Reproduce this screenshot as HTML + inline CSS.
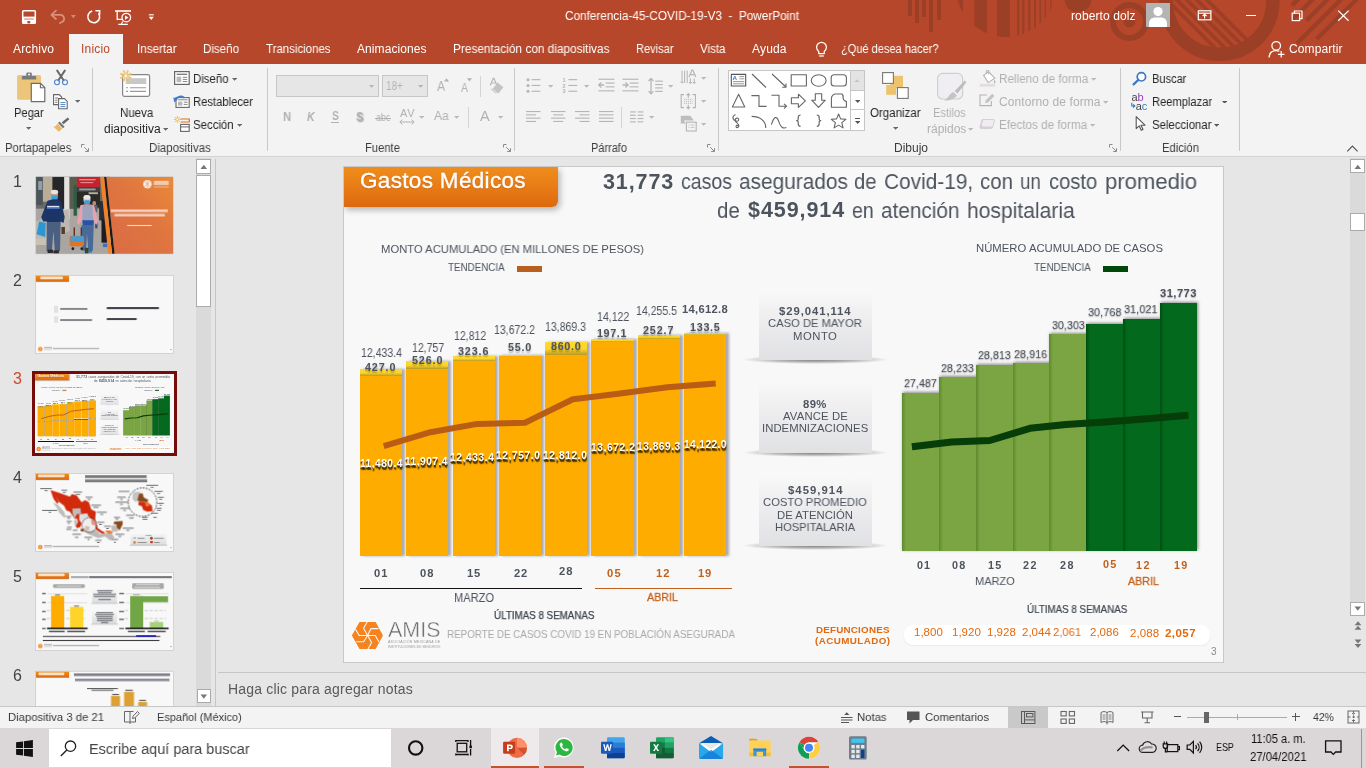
<!DOCTYPE html>
<html lang="es"><head><meta charset="utf-8"><title>PowerPoint</title>
<style>
html,body{margin:0;padding:0}
body{width:1366px;height:768px;overflow:hidden;position:relative;background:#E6E6E6;font-family:"Liberation Sans",sans-serif;}
.t{position:absolute;white-space:nowrap;transform-origin:0 50%;display:block;will-change:transform}
.b{position:absolute;display:block;box-sizing:border-box}
.c{position:absolute;overflow:hidden}
</style></head>
<body>
<!-- s_top -->
<div class="b" style="left:0.0px;top:0.0px;width:1366.0px;height:64.0px;background:#B7472A;"></div>
<svg class="b" style="left:0.0px;top:0.0px;" width="1366.0" height="64.0" viewBox="0 0 1366.00 64.00"><g fill="#9C3F27" stroke="none">
    <rect x="908" y="0" width="4" height="16"/><rect x="915" y="0" width="4" height="23"/><rect x="922" y="0" width="4" height="17"/><rect x="929" y="0" width="4" height="32"/><rect x="937" y="0" width="4" height="20"/>
    </g>
    <defs><clipPath id="semi"><circle cx="1006" cy="-13" r="50"/></clipPath></defs>
    <g clip-path="url(#semi)" fill="#9C3F27">
      <rect x="956" y="0" width="7" height="40"/>
      <rect x="974.3" y="0" width="12.7" height="40"/>
      <rect x="997" y="0" width="13" height="40"/>
      <rect x="1017" y="0" width="2.2" height="40"/><rect x="1022.2" y="0" width="2.2" height="40"/><rect x="1028.2" y="0" width="2.2" height="40"/><rect x="1034" y="0" width="2" height="40"/><rect x="1039.5" y="0" width="1.8" height="40"/><rect x="1044.6" y="0" width="1.5" height="40"/><rect x="1050.2" y="0" width="1.3" height="40"/><rect x="1055.2" y="0" width="1" height="40"/>
    </g>
    <circle cx="1078" cy="-1" r="13.5" fill="#9C3F27"/>
    <circle cx="1129.5" cy="21.5" r="16.5" fill="none" stroke="#9C3F27" stroke-width="6"/>
    <circle cx="1129.5" cy="21.5" r="6" fill="#9C3F27"/>
    <circle cx="1219.6" cy="1" r="53.3" fill="none" stroke="#9C3F27" stroke-width="13.5"/>
    <defs><clipPath id="bigin"><circle cx="1219.6" cy="1" r="47"/></clipPath></defs>
    <g clip-path="url(#bigin)" stroke="#9C3F27" stroke-width="3.6" fill="none">
      <path d="M1157 -10 L1237 70"/><path d="M1167 -10 L1247 70"/><path d="M1177 -10 L1257 70"/><path d="M1187 -10 L1267 70"/><path d="M1197 -10 L1277 70"/>
    </g>
    <g stroke="#9C3F27" stroke-width="4.2" fill="none">
      <path d="M1291.8 5.6 L1303 -5.6"/><path d="M1291.5 20.5 L1318 -6"/><path d="M1306.500 20.4 L1333 -6"/><path d="M1297 43.5 L1347 -6.500"/><path d="M1316.700 39 L1362 -6"/>
    </g></svg>
<svg class="b" style="left:18.0px;top:6.0px;" width="142.0" height="20.0" viewBox="0 0 142.00 20.00">
      <rect x="4.700" y="4.700" width="12.600" height="12.600" rx="0.800" fill="none" stroke="#fff" stroke-width="1.500"/>
      <rect x="5" y="10.600" width="12" height="6.800" fill="#fff"/>
      <rect x="9.400" y="15" width="2.800" height="2.400" fill="#B7472A"/><rect x="6.200" y="12.400" width="9.600" height="1.300" fill="#B7472A" opacity=".55"/>
      <g fill="none" stroke="#D9907C" stroke-width="1.700" stroke-linecap="round" stroke-linejoin="round"><path d="M38 4.600l-4.600 4.200l4.600 4.200"/><path d="M34 8.800h8.500a3.800 3.800 0 0 1 1.500 7.200l-2 1"/></g>
      <path d="M52.900 9h4.900l-2.450 3.200z" fill="#D08A78"/>
      <g fill="none" stroke="#fff" stroke-width="1.600"><path d="M74.200 5.100a5.900 5.900 0 1 0 6.300 2.200"/><path d="M77.400 4.700h4.200v4.100" stroke-width="1.600"/></g>
      <g fill="none" stroke="#fff" stroke-width="1.300"><path d="M97 5h16" stroke-width="1.600"/><path d="M99.200 5.200v8.100h5"/><circle cx="108.300" cy="11.600" r="4.300" fill="#B7472A"/><path d="M107 9.500v4.200l3.500-2.100z" fill="#fff" stroke="none"/><path d="M104.600 15.600l-1.200 2.600M100.300 18.400h9.500" stroke-width="1.100"/></g>
      <path d="M130.800 8.800h5" stroke="#fff" stroke-width="1.100"/><path d="M130.800 10.700h5l-2.500 3.200z" fill="#fff"/>
    </svg>
<span class="t" style="left:565.0px;top:7.5px;font-size:12px;line-height:16px;color:#fff;transform:scaleX(0.9801);white-space:pre;">Conferencia-45-COVID-19-V3  -  PowerPoint</span>
<span class="t" style="left:1071.0px;top:7.5px;font-size:12px;line-height:16px;color:#fff;letter-spacing:0.103px;">roberto dolz</span>
<div class="b" style="left:1146.0px;top:3.0px;width:24.0px;height:24.0px;background:#B4B4B4;"></div>
<svg class="b" style="left:1146.0px;top:3.0px;" width="24.0" height="24.0" viewBox="0 0 24.00 24.00"><circle cx="12" cy="8.6" r="4.6" fill="#fff"/><path d="M3 24v-3.5c0-4 3-6 6-6h6c3 0 6 2 6 6v3.5z" fill="#fff"/></svg>
<svg class="b" style="left:1196.0px;top:8.0px;" width="18.0" height="14.0" viewBox="0 0 18.00 14.00"><g fill="none" stroke="#fff" stroke-width="1.2"><rect x="2.3" y="2.8" width="12.6" height="9"/><path d="M2.3 5.2h12.6"/><path d="M8.6 10.6v-4M6.6 8.2l2-2l2 2"/></g></svg>
<div class="b" style="left:1246.0px;top:14.6px;width:10.2px;height:1.2px;background:#fff;"></div>
<svg class="b" style="left:1290.0px;top:9.0px;" width="14.0" height="13.0" viewBox="0 0 14.00 13.00"><g fill="none" stroke="#fff" stroke-width="1.2"><rect x="2.2" y="4.2" width="7.4" height="7.4"/><path d="M4.4 4v-2h7.6v7.6h-2.2"/></g></svg>
<svg class="b" style="left:1336.0px;top:8.0px;" width="15.0" height="15.0" viewBox="0 0 15.00 15.00"><path d="M2.2 2.6l10.4 10.2M12.6 2.6L2.2 12.8" stroke="#fff" stroke-width="1.25" fill="none"/></svg>
<div class="b" style="left:69.0px;top:34.0px;width:53.5px;height:30.0px;background:#F3F3F3;"></div>
<span class="t" style="left:13.0px;top:40.6px;font-size:12px;line-height:16px;color:#fff;letter-spacing:0.165px;">Archivo</span>
<span class="t" style="left:137.0px;top:40.6px;font-size:12px;line-height:16px;color:#fff;transform:scaleX(0.9710);">Insertar</span>
<span class="t" style="left:203.0px;top:40.6px;font-size:12px;line-height:16px;color:#fff;transform:scaleX(0.9638);">Diseño</span>
<span class="t" style="left:266.0px;top:40.6px;font-size:12px;line-height:16px;color:#fff;transform:scaleX(0.9544);">Transiciones</span>
<span class="t" style="left:357.0px;top:40.6px;font-size:12px;line-height:16px;color:#fff;letter-spacing:0.080px;">Animaciones</span>
<span class="t" style="left:453.0px;top:40.6px;font-size:12px;line-height:16px;color:#fff;transform:scaleX(0.9858);">Presentación con diapositivas</span>
<span class="t" style="left:636.0px;top:40.6px;font-size:12px;line-height:16px;color:#fff;transform:scaleX(0.9220);">Revisar</span>
<span class="t" style="left:700.0px;top:40.6px;font-size:12px;line-height:16px;color:#fff;transform:scaleX(0.9637);">Vista</span>
<span class="t" style="left:752.0px;top:40.6px;font-size:12px;line-height:16px;color:#fff;letter-spacing:0.173px;">Ayuda</span>
<span class="t" style="left:81.0px;top:40.6px;font-size:12px;line-height:16px;color:#B7472A;letter-spacing:0.198px;">Inicio</span>
<span class="t" style="left:841.0px;top:40.6px;font-size:12px;line-height:16px;color:#fff;transform:scaleX(0.9193);">¿Qué desea hacer?</span>
<svg class="b" style="left:812.0px;top:38.0px;" width="19.0" height="22.0" viewBox="0 0 19.00 22.00"><g fill="none" stroke="#fff" stroke-width="1.25"><path d="M6.8 13.6c-1.4-1.2-2.2-2.6-2.2-4.4a4.9 4.9 0 0 1 9.8 0c0 1.800-.8 3.200-2.200 4.400v2.100h-5.400z"/><path d="M7.200 18h4.600"/></g></svg>
<span class="t" style="left:1288.5px;top:40.6px;font-size:12px;line-height:16px;color:#fff;letter-spacing:0.103px;">Compartir</span>
<svg class="b" style="left:1267.0px;top:39.0px;" width="20.0" height="21.0" viewBox="0 0 20.00 21.00"><g fill="none" stroke="#fff" stroke-width="1.25"><circle cx="9.2" cy="6.800" r="4.300"/><path d="M2 18.500c.4-4.500 3-7 7.200-7c1.200 0 2.200.2 3.100.6"/><path d="M14.200 12v6.600M10.900 15.300h6.600"/></g></svg>
<!-- s_ribbon -->
<div class="b" style="left:0.0px;top:64.0px;width:1366.0px;height:92.0px;background:#F3F3F3;"></div>
<div class="b" style="left:0.0px;top:156.0px;width:1366.0px;height:1.0px;background:#D2D2D2;"></div>
<div class="b" style="left:92.0px;top:68.0px;width:1.0px;height:83.0px;background:#C8C8C8;"></div>
<div class="b" style="left:267.0px;top:68.0px;width:1.0px;height:83.0px;background:#C8C8C8;"></div>
<div class="b" style="left:513.9px;top:68.0px;width:1.0px;height:83.0px;background:#C8C8C8;"></div>
<div class="b" style="left:717.9px;top:68.0px;width:1.0px;height:83.0px;background:#C8C8C8;"></div>
<div class="b" style="left:1120.0px;top:68.0px;width:1.0px;height:83.0px;background:#C8C8C8;"></div>
<div class="b" style="left:1238.7px;top:68.0px;width:1.0px;height:83.0px;background:#C8C8C8;"></div>
<svg class="b" style="left:16.0px;top:70.0px;" width="31.0" height="34.0" viewBox="0 0 31.00 34.00">
      <rect x="1.100" y="4.900" width="23.900" height="24.900" rx="1.600" fill="#EDC57A"/>
      <path d="M5.900 9.400v-2.500a1 1 0 0 1 1-1h3.400v-2.300a1.200 1.200 0 0 1 1.200-1.200h3.100a1.200 1.200 0 0 1 1.200 1.200v2.300h3.400a1 1 0 0 1 1 1v2.500z" fill="#7A7A7A"/>
      <circle cx="13.050" cy="4.600" r="1.050" fill="#F3F3F3"/>
      <path d="M15.300 13.300h9.300l4.200 4.200v14.100h-13.500z" fill="#fff" stroke="#6E6E6E" stroke-width="1.200"/>
      <path d="M24.400 13.500v4.200h4.200" fill="none" stroke="#6E6E6E" stroke-width="1.100"/></svg>
<span class="t" style="left:14.3px;top:105.1px;font-size:12px;line-height:16px;color:#262626;transform:scaleX(0.9276);">Pegar</span>
<svg class="b" style="left:26.1px;top:127.3px" width="5.2" height="2.8" viewBox="0 0 5.2 2.8"><path d="M0 0h5.2l-2.6 2.8z" fill="#666"/></svg>
<svg class="b" style="left:52.0px;top:69.0px;" width="18.0" height="18.0" viewBox="0 0 18.00 18.00"><g fill="none" stroke="#666" stroke-width="1.900" stroke-linecap="round"><path d="M5.200 1.600l6.400 9.600M12.800 1.600l-6.400 9.600"/></g>
      <circle cx="5" cy="13.300" r="2.500" fill="none" stroke="#4A86CC" stroke-width="1.100"/><circle cx="13" cy="13.300" r="2.500" fill="none" stroke="#4A86CC" stroke-width="1.100"/></svg>
<svg class="b" style="left:52.0px;top:93.0px;" width="18.0" height="17.0" viewBox="0 0 18.00 17.00"><path d="M1.600 1.600h5.600l2.400 2.400v7.600h-8z" fill="#fff" stroke="#666" stroke-width="1.100"/>
      <path d="M6.600 5.600h5.800l2.800 2.800v7.400h-8.600z" fill="#fff" stroke="#666" stroke-width="1.100"/>
      <path d="M3.200 5h3M3.200 7.200h2.200M3.200 9.300h2.200" stroke="#666" stroke-width=".9"/>
      <path d="M8.400 9.600h5M8.400 11.600h5M8.400 13.600h5" stroke="#3B78C2" stroke-width=".9"/></svg>
<svg class="b" style="left:74.9px;top:100.1px" width="5.2" height="2.8" viewBox="0 0 5.2 2.8"><path d="M0 0h5.2l-2.6 2.8z" fill="#666"/></svg>
<svg class="b" style="left:52.0px;top:115.0px;" width="18.0" height="18.0" viewBox="0 0 18.00 18.00"><path d="M9.800 7.200l6-4.800l1.500 1.800l-5.800 5z" fill="#666"/><path d="M7.600 6.600l5 5.200l-1.600 1.400l-5-5.200z" fill="#777"/>
      <path d="M5.400 8.400l5 5.200l-3.600 3.200l-5.600-5.200c2 0 3.200-1 4.200-3.200z" fill="#EDB95E"/></svg>
<span class="t" style="left:4.5px;top:139.6px;font-size:12px;line-height:16px;color:#3C3C3C;transform:scaleX(0.9376);">Portapapeles</span>
<svg class="b" style="left:81.0px;top:144.0px;" width="8.0" height="8.0" viewBox="0 0 8.00 8.00"><path d="M0.500 3.500v-3h3M3.200 3.200l4 4M7.500 4.200v3.300h-3.300" fill="none" stroke="#8C8C8C" stroke-width="1"/></svg>
<svg class="b" style="left:118.0px;top:68.0px;" width="34.0" height="31.0" viewBox="0 0 34.00 31.00">
      <rect x="4.600" y="6.600" width="27" height="21.800" rx="1.800" fill="#fff" stroke="#858585" stroke-width="1.200"/>
      <rect x="7.700" y="10.200" width="20.600" height="5.800" fill="#C8C8C8"/>
      <path d="M8 19.800h2M12 19.800h16M8 23.400h2M12 23.400h16" stroke="#9A9A9A" stroke-width="1.100"/>
      <path d="M10.20 8.89L13.25 10.16M8.79 10.30L10.06 13.35M6.81 10.30L5.54 13.35M5.40 8.89L2.35 10.16M5.40 6.91L2.35 5.64M6.81 5.50L5.54 2.45M8.79 5.50L10.06 2.45M10.20 6.91L13.25 5.64" stroke="#EDC36E" stroke-width="1.800" fill="none"/><circle cx="7.800" cy="7.900" r="2.100" fill="#F6F1E4" stroke="#EDC36E" stroke-width="1"/></svg>
<span class="t" style="left:119.5px;top:105.1px;font-size:12px;line-height:16px;color:#262626;transform:scaleX(0.9572);">Nueva</span>
<span class="t" style="left:103.5px;top:120.7px;font-size:12px;line-height:16px;color:#262626;transform:scaleX(0.9965);">diapositiva</span>
<svg class="b" style="left:163.0px;top:127.8px" width="5.2" height="2.8" viewBox="0 0 5.2 2.8"><path d="M0 0h5.2l-2.6 2.8z" fill="#666"/></svg>
<svg class="b" style="left:173.0px;top:70.0px;" width="18.0" height="17.0" viewBox="0 0 18.00 17.00"><rect x="1.600" y="1.600" width="14.600" height="12.800" fill="#fff" stroke="#666" stroke-width="1.200"/>
      <path d="M3.600 4.300h10.600" stroke="#777" stroke-width="1.300"/><rect x="3.600" y="6.600" width="4.600" height="5.600" fill="#B9B9B9"/><path d="M9.800 7.300h4.400M9.800 9.400h4.400M9.800 11.500h4.400" stroke="#888" stroke-width="1"/></svg>
<span class="t" style="left:193.0px;top:71.1px;font-size:12px;line-height:16px;color:#262626;transform:scaleX(0.9504);">Diseño</span>
<svg class="b" style="left:231.7px;top:77.8px" width="5.2" height="2.8" viewBox="0 0 5.2 2.8"><path d="M0 0h5.2l-2.6 2.8z" fill="#666"/></svg>
<svg class="b" style="left:173.0px;top:93.0px;" width="18.0" height="17.0" viewBox="0 0 18.00 17.00"><rect x="3" y="4.600" width="13.200" height="9.800" fill="#fff" stroke="#666" stroke-width="1.100"/>
      <rect x="5" y="8.600" width="4.400" height="4" fill="#B9B9B9"/><path d="M10.800 9.200h3.800M10.800 11.400h3.800M5 6.800h9.600" stroke="#888" stroke-width="1"/>
      <path d="M2.600 7.400c.6-3.600 5.200-5 8.400-2.600" fill="none" stroke="#3F7FC8" stroke-width="2"/><path d="M0.200 4.600l4.800 1.200l-3.600 3.600z" fill="#3F7FC8"/></svg>
<span class="t" style="left:193.0px;top:94.1px;font-size:12px;line-height:16px;color:#262626;transform:scaleX(0.9371);">Restablecer</span>
<svg class="b" style="left:173.0px;top:114.0px;" width="18.0" height="19.0" viewBox="0 0 18.00 19.00"><path d="M5.30 5.40L7.70 5.40M5.01 6.11L6.70 7.80M4.30 6.40L4.30 8.80M3.59 6.11L1.90 7.80M3.30 5.40L0.90 5.40M3.59 4.69L1.90 3.00M4.30 4.40L4.30 2.00M5.01 4.69L6.70 3.00" stroke="#E9B04A" stroke-width=".9" fill="none"/>
      <path d="M7.600 5h8.700v3h-8.700" fill="none" stroke="#E2701E" stroke-width="1.200"/>
      <rect x="7.600" y="10.400" width="8.600" height="7" fill="#fff" stroke="#666" stroke-width="1.100"/><path d="M7.600 12.900h8.600" stroke="#666" stroke-width="1"/></svg>
<span class="t" style="left:193.0px;top:117.3px;font-size:12px;line-height:16px;color:#262626;transform:scaleX(0.9510);">Sección</span>
<svg class="b" style="left:236.9px;top:124.0px" width="5.2" height="2.8" viewBox="0 0 5.2 2.8"><path d="M0 0h5.2l-2.6 2.8z" fill="#666"/></svg>
<span class="t" style="left:149.0px;top:140.4px;font-size:12px;line-height:16px;color:#3C3C3C;transform:scaleX(0.9553);">Diapositivas</span>
<div class="b" style="left:276.3px;top:75.4px;width:103.1px;height:22.1px;background:#E6E6E6;border:1px solid #C6C6C6;"></div>
<div class="b" style="left:382.2px;top:75.4px;width:45.5px;height:22.1px;background:#E6E6E6;border:1px solid #C6C6C6;"></div>
<svg class="b" style="left:369.4px;top:85.2px" width="5.2" height="2.8" viewBox="0 0 5.2 2.8"><path d="M0 0h5.2l-2.6 2.8z" fill="#B4B4B4"/></svg>
<svg class="b" style="left:417.8px;top:85.2px" width="5.2" height="2.8" viewBox="0 0 5.2 2.8"><path d="M0 0h5.2l-2.6 2.8z" fill="#B4B4B4"/></svg>
<span class="t" style="left:386.0px;top:78.4px;font-size:12px;line-height:16px;color:#B4B4B4;transform:scaleX(0.8352);">18+</span>
<span class="t" style="left:436.7px;top:77.1px;font-size:14.5px;line-height:19px;color:#B1B1B1;transform:scaleX(0.8375);">A</span>
<svg class="b" style="left:443.5px;top:78.0px;" width="6.0" height="4.0" viewBox="0 0 6.00 4.00"><path d="M0 3.500h5l-2.500-3.300z" fill="#B1B1B1"/></svg>
<span class="t" style="left:461.3px;top:80.1px;font-size:12px;line-height:16px;color:#B1B1B1;transform:scaleX(0.8745);">A</span>
<svg class="b" style="left:467.4px;top:78.0px;" width="6.0" height="4.0" viewBox="0 0 6.00 4.00"><path d="M0 0.300h5l-2.500 3.300z" fill="#B1B1B1"/></svg>
<div class="b" style="left:479.7px;top:76.4px;width:1.0px;height:20.6px;background:#D4D4D4;"></div>
<svg class="b" style="left:488.0px;top:77.0px;" width="18.0" height="18.0" viewBox="0 0 18.00 18.00"><path d="M2.200 8.600l3-7.200h.8l3 7.200M3.400 6h4.400" fill="none" stroke="#B9B9B9" stroke-width="1.200"/>
      <path d="M9.600 5.600l5.800 4.600l-5 6.200l-5.800-4.600z" fill="#C4C4C4"/><path d="M3.600 11.200l5.400 4.400l-1 1.200l-5.400-4.400z" fill="#D8D0DC"/></svg>
<span class="t" style="left:283.0px;top:108.6px;font-size:12.5px;line-height:16px;color:#B1B1B1;font-weight:700;transform:scaleX(0.9084);">N</span>
<span class="t" style="left:306.6px;top:108.6px;font-size:12.5px;line-height:16px;color:#B1B1B1;font-weight:700;font-style:italic;transform:scaleX(0.8419);">K</span>
<span class="t" style="left:331.6px;top:108.2px;font-size:12.5px;line-height:16px;color:#B1B1B1;font-weight:700;transform:scaleX(0.8156);">S</span>
<div class="b" style="left:331.0px;top:122.4px;width:7.8px;height:1.1px;background:#B1B1B1;"></div>
<span class="t" style="left:355.6px;top:108.6px;font-size:12.5px;line-height:16px;color:#B1B1B1;font-weight:700;transform:scaleX(0.8395);text-shadow:1.200px 1.200px 1.500px #999;">S</span>
<span class="t" style="left:376.0px;top:110.4px;font-size:10.5px;line-height:14px;color:#B1B1B1;transform:scaleX(0.8507);">abc</span>
<div class="b" style="left:375.3px;top:117.6px;width:15.7px;height:1.0px;background:#B1B1B1;"></div>
<span class="t" style="left:399.6px;top:106.4px;font-size:11px;line-height:14px;color:#B1B1B1;letter-spacing:0.742px;">AV</span>
<svg class="b" style="left:399.0px;top:118.5px;" width="16.0" height="6.0" viewBox="0 0 16.00 6.00"><path d="M1 3h14M3.400 0.600l-2.600 2.400l2.600 2.400M12.600 0.600l2.600 2.400l-2.600 2.400" fill="none" stroke="#B1B1B1" stroke-width="1"/></svg>
<svg class="b" style="left:418.7px;top:116.0px" width="5.2" height="2.8" viewBox="0 0 5.2 2.8"><path d="M0 0h5.2l-2.6 2.8z" fill="#B9B9B9"/></svg>
<span class="t" style="left:434.0px;top:108.4px;font-size:12.5px;line-height:16px;color:#B1B1B1;transform:scaleX(0.9680);">Aa</span>
<svg class="b" style="left:453.7px;top:116.0px" width="5.2" height="2.8" viewBox="0 0 5.2 2.8"><path d="M0 0h5.2l-2.6 2.8z" fill="#B9B9B9"/></svg>
<div class="b" style="left:467.8px;top:107.0px;width:1.0px;height:20.6px;background:#D4D4D4;"></div>
<span class="t" style="left:479.6px;top:106.5px;font-size:14.5px;line-height:19px;color:#B1B1B1;transform:scaleX(0.9512);">A</span>
<svg class="b" style="left:497.7px;top:116.0px" width="5.2" height="2.8" viewBox="0 0 5.2 2.8"><path d="M0 0h5.2l-2.6 2.8z" fill="#B9B9B9"/></svg>
<span class="t" style="left:365.4px;top:140.4px;font-size:12px;line-height:16px;color:#3C3C3C;transform:scaleX(0.9343);">Fuente</span>
<svg class="b" style="left:503.0px;top:144.0px;" width="8.0" height="8.0" viewBox="0 0 8.00 8.00"><path d="M0.500 3.500v-3h3M3.200 3.200l4 4M7.500 4.200v3.300h-3.300" fill="none" stroke="#8C8C8C" stroke-width="1"/></svg>
<svg class="b" style="left:526.0px;top:77.0px;" width="15.0" height="17.0" viewBox="0 0 15.00 17.00"><g fill="#B4B4B4"><circle cx="2" cy="2.700" r="1.500"/><circle cx="2" cy="8.400" r="1.500"/><circle cx="2" cy="14.200" r="1.500"/>
      <rect x="5.600" y="2.100" width="8.800" height="1.100"/><rect x="5.600" y="7.900" width="8.800" height="1.100"/><rect x="5.600" y="13.700" width="8.800" height="1.100"/></g></svg>
<svg class="b" style="left:547.8px;top:85.2px" width="5.2" height="2.8" viewBox="0 0 5.2 2.8"><path d="M0 0h5.2l-2.6 2.8z" fill="#B9B9B9"/></svg>
<svg class="b" style="left:562.0px;top:77.0px;" width="16.0" height="18.0" viewBox="0 0 16.00 18.00"><g fill="#B4B4B4"><rect x="6.400" y="2.100" width="8.800" height="1.100"/><rect x="6.400" y="7.900" width="8.800" height="1.100"/><rect x="6.400" y="13.700" width="8.800" height="1.100"/></g>
      <g font-family="Liberation Sans" font-size="5.500" font-weight="700" fill="#B4B4B4"><text x="0.600" y="4.600">1</text><text x="0.600" y="10.500">2</text><text x="0.600" y="16.400">3</text></g></svg>
<svg class="b" style="left:583.7px;top:85.2px" width="5.2" height="2.8" viewBox="0 0 5.2 2.8"><path d="M0 0h5.2l-2.6 2.8z" fill="#B9B9B9"/></svg>
<svg class="b" style="left:598.0px;top:77.0px;" width="18.0" height="18.0" viewBox="0 0 18.00 18.00"><g fill="#B4B4B4"><rect x="0.500" y="1.700" width="16" height="1.100"/><rect x="7.600" y="5.500" width="8.900" height="1.100"/><rect x="7.600" y="9.300" width="8.900" height="1.100"/><rect x="0.500" y="13.300" width="16" height="1.100"/></g>
      <path d="M6.200 8h-5.400M3.400 5.400l-2.700 2.600l2.700 2.600" fill="none" stroke="#B4B4B4" stroke-width="1.300"/></svg>
<svg class="b" style="left:622.0px;top:77.0px;" width="18.0" height="18.0" viewBox="0 0 18.00 18.00"><g fill="#B4B4B4"><rect x="0.500" y="1.700" width="16" height="1.100"/><rect x="7.600" y="5.500" width="8.900" height="1.100"/><rect x="7.600" y="9.300" width="8.900" height="1.100"/><rect x="0.500" y="13.300" width="16" height="1.100"/></g>
      <path d="M0.600 8h5.400M3.400 5.400l2.700 2.600l-2.700 2.600" fill="none" stroke="#B4B4B4" stroke-width="1.300"/></svg>
<svg class="b" style="left:648.0px;top:77.0px;" width="16.0" height="19.0" viewBox="0 0 16.00 19.00"><path d="M3 1.600v15M0.600 4l2.400-2.600l2.400 2.600M0.600 14.200l2.400 2.600l2.400-2.600" fill="none" stroke="#B4B4B4" stroke-width="1.200"/>
      <g fill="#B4B4B4"><rect x="7.200" y="3.600" width="7.600" height="1.100"/><rect x="7.200" y="7" width="7.600" height="1.100"/><rect x="7.200" y="10.400" width="7.600" height="1.100"/><rect x="7.200" y="13.800" width="7.600" height="1.100"/></g></svg>
<svg class="b" style="left:668.0px;top:85.2px" width="5.2" height="2.8" viewBox="0 0 5.2 2.8"><path d="M0 0h5.2l-2.6 2.8z" fill="#B9B9B9"/></svg>
<svg class="b" style="left:680.0px;top:69.0px;" width="18.0" height="18.0" viewBox="0 0 18.00 18.00"><path d="M2 1.600v12.400M4.600 1.600v12.400M7.200 1.600v12.400" stroke="#B4B4B4" stroke-width="1" fill="none"/>
      <path d="M9 8l3-7h.8l3 7M10.200 5.600h4.400" fill="none" stroke="#B4B4B4" stroke-width="1.200"/>
      <path d="M10.400 9.400v5.200M9 13l1.400 1.600l1.400-1.600M14.200 9.400v5.200M12.800 13l1.400 1.600l1.400-1.600M0.600 12.600l1.400 1.600l1.400-1.600" fill="none" stroke="#B4B4B4" stroke-width="1"/></svg>
<svg class="b" style="left:700.7px;top:77.0px" width="5.2" height="2.8" viewBox="0 0 5.2 2.8"><path d="M0 0h5.2l-2.6 2.8z" fill="#B9B9B9"/></svg>
<svg class="b" style="left:680.0px;top:93.0px;" width="18.0" height="17.0" viewBox="0 0 18.00 17.00"><path d="M4 1.600h-2.800v13h2.800M12.600 1.600h2.800v13h-2.800" fill="none" stroke="#B4B4B4" stroke-width="1.100"/>
      <path d="M4 6.300h8.600M4 8.300h8.600M4 10.300h8.600" stroke="#B4B4B4" stroke-width=".9" stroke-dasharray="1.200 .8"/>
      <path d="M8.300 0.600v4.400M6.600 2.400l1.700-1.800l1.700 1.800M8.300 15.800v-4M6.600 14l1.700 1.800l1.700-1.800" fill="none" stroke="#B4B4B4" stroke-width="1.100"/></svg>
<svg class="b" style="left:700.7px;top:100.0px" width="5.2" height="2.8" viewBox="0 0 5.2 2.8"><path d="M0 0h5.2l-2.6 2.8z" fill="#B9B9B9"/></svg>
<svg class="b" style="left:680.0px;top:115.0px;" width="18.0" height="18.0" viewBox="0 0 18.00 18.00"><path d="M0.800 0.800h9.600l3.400 4.600h-9.800l1.600 3h-4.800z" fill="#BDBDBD"/>
      <rect x="6.400" y="7.200" width="9.800" height="8.800" fill="#F3F3F3" stroke="#B4B4B4" stroke-width="1.100"/><path d="M8.400 10h1M10.600 10h3.800M8.400 12.400h1M10.600 12.400h3.800" stroke="#D8B8D0" stroke-width="1"/></svg>
<svg class="b" style="left:700.7px;top:123.0px" width="5.2" height="2.8" viewBox="0 0 5.2 2.8"><path d="M0 0h5.2l-2.6 2.8z" fill="#B9B9B9"/></svg>
<svg class="b" style="left:526.4px;top:111.4px;" width="15.5" height="14.2" viewBox="0 0 15.50 14.20"><rect x="0.0" y="0.0" width="14.5" height="1.100" fill="#B4B4B4"/><rect x="0.0" y="3.3" width="10" height="1.100" fill="#B4B4B4"/><rect x="0.0" y="6.6" width="14.5" height="1.100" fill="#B4B4B4"/><rect x="0.0" y="9.9" width="10" height="1.100" fill="#B4B4B4"/></svg>
<svg class="b" style="left:550.6px;top:111.4px;" width="15.5" height="14.2" viewBox="0 0 15.50 14.20"><rect x="0.0" y="0.0" width="14.5" height="1.100" fill="#B4B4B4"/><rect x="2.2" y="3.3" width="10" height="1.100" fill="#B4B4B4"/><rect x="0.0" y="6.6" width="14.5" height="1.100" fill="#B4B4B4"/><rect x="2.2" y="9.9" width="10" height="1.100" fill="#B4B4B4"/></svg>
<svg class="b" style="left:574.8px;top:111.4px;" width="15.5" height="14.2" viewBox="0 0 15.50 14.20"><rect x="0.0" y="0.0" width="14.5" height="1.100" fill="#B4B4B4"/><rect x="4.5" y="3.3" width="10" height="1.100" fill="#B4B4B4"/><rect x="0.0" y="6.6" width="14.5" height="1.100" fill="#B4B4B4"/><rect x="4.5" y="9.9" width="10" height="1.100" fill="#B4B4B4"/></svg>
<svg class="b" style="left:598.7px;top:111.4px;" width="15.5" height="14.2" viewBox="0 0 15.50 14.20"><rect x="0.0" y="0.0" width="14.5" height="1.100" fill="#B4B4B4"/><rect x="0.0" y="3.3" width="14.5" height="1.100" fill="#B4B4B4"/><rect x="0.0" y="6.6" width="14.5" height="1.100" fill="#B4B4B4"/><rect x="0.0" y="9.9" width="14.5" height="1.100" fill="#B4B4B4"/></svg>
<div class="b" style="left:620.8px;top:107.0px;width:1.0px;height:20.6px;background:#D4D4D4;"></div>
<svg class="b" style="left:630.0px;top:111.0px;" width="15.0" height="13.0" viewBox="0 0 15.00 13.00"><g fill="#B4B4B4"><rect x="0" y="0.4" width="5.800" height="1.100"/><rect x="7.600" y="0.4" width="5.800" height="1.100"/><rect x="0" y="3.7" width="5.800" height="1.100"/><rect x="7.600" y="3.7" width="5.800" height="1.100"/><rect x="0" y="7.0" width="5.800" height="1.100"/><rect x="7.600" y="7.0" width="5.800" height="1.100"/><rect x="0" y="10.3" width="5.800" height="1.100"/><rect x="7.600" y="10.3" width="5.800" height="1.100"/></g></svg>
<svg class="b" style="left:648.8px;top:116.0px" width="5.2" height="2.8" viewBox="0 0 5.2 2.8"><path d="M0 0h5.2l-2.6 2.8z" fill="#B9B9B9"/></svg>
<span class="t" style="left:590.5px;top:140.4px;font-size:12px;line-height:16px;color:#3C3C3C;transform:scaleX(0.9124);">Párrafo</span>
<svg class="b" style="left:707.0px;top:144.0px;" width="8.0" height="8.0" viewBox="0 0 8.00 8.00"><path d="M0.500 3.500v-3h3M3.200 3.200l4 4M7.500 4.200v3.300h-3.300" fill="none" stroke="#8C8C8C" stroke-width="1"/></svg>
<!-- s_ribbon2 -->
<div class="b" style="left:728.3px;top:70.2px;width:136.3px;height:61.1px;background:#fff;border:1px solid #C6C6C6;"></div>
<div class="b" style="left:850.3px;top:70.2px;width:14.3px;height:61.1px;background:#fff;border:1px solid #C6C6C6;"></div>
<div class="b" style="left:850.3px;top:70.2px;width:14.3px;height:21.0px;background:#E3E3E3;border:1px solid #C6C6C6;"></div>
<div class="b" style="left:850.3px;top:91.2px;width:14.3px;height:19.0px;border-bottom:1px solid #C6C6C6;"></div>
<svg class="b" style="left:854.4px;top:79.2px;" width="6.2" height="3.2" viewBox="0 0 6.20 3.20"><path d="M0.500 3h5l-2.500-2.800z" fill="#C4C4C4"/></svg>
<svg class="b" style="left:854.8px;top:100.1px" width="5.4" height="3" viewBox="0 0 5.4 3"><path d="M0 0h5.4l-2.7 3z" fill="#555"/></svg>
<div class="b" style="left:854.6px;top:117.8px;width:5.8px;height:1.1px;background:#555;"></div>
<svg class="b" style="left:854.8px;top:120.7px" width="5.4" height="3" viewBox="0 0 5.4 3"><path d="M0 0h5.4l-2.7 3z" fill="#555"/></svg>
<svg class="b" style="left:728.0px;top:70.0px;" width="122.0" height="62.0" viewBox="0 0 122.00 62.00"><g fill="none" stroke="#666" stroke-width="1.100" stroke-linejoin="round">
      <rect x="3.300" y="4.400" width="14.400" height="11.600" stroke="#555"/>
      <path d="M11.400 6.600h4.800M11.400 8.800h4.800M5 11.600h11.200M5 13.800h11.200" stroke="#8A8A8A" stroke-width=".9"/>
      <path d="M24 4l14 13.500"/>
      <path d="M44 4l14 13M58 13.400v3.800h-3.800"/>
      <rect x="63.200" y="4.800" width="15.200" height="11.200"/>
      <ellipse cx="90.700" cy="10.500" rx="7.400" ry="5.800"/>
      <rect x="103.200" y="4.800" width="15.200" height="11.200" rx="3"/>
      <path d="M10.600 24.200l6.200 12.800h-12.400z"/>
      <path d="M23.400 25.600h7.600v10.800h7.600"/>
      <path d="M43.400 25.200h7.600v11h7.400M56 33.800l2.600 2.400l-2.600 2.400"/>
      <path d="M63.400 27.800h7v-3.600l7 6.600l-7 6.600v-3.600h-7z"/>
      <path d="M87.300 23.800h6.400v6.400h3.600l-6.800 7.200l-6.800-7.200h3.600z"/>
      <path d="M103.400 37.200v-8.800a4.400 4.400 0 0 1 4.400-4.400h6.200a4 4 0 0 1 1 3.800a4 4 0 0 0 3.400 3.600v5.800z"/>
      <path d="M7.500 44.600c-3 1.600-3.400 3.600-1.400 5.400c2.200 2 4.800 1.600 4.600-.6c-.2-2-3.400-1.600-3.600.8c-.2 2.400 3.800 3 3.800 5.600c0 2-2.400 2.400-2.800 1c-.4-1.600 1.600-2 2.600-.6"/>
      <path d="M23.600 46.400c8 0 14.200 4 14.200 11.600"/>
      <path d="M43.400 54.600c2.600-8.800 5.600-8.800 7.400-3c1.800 5.800 4.200 7.200 7.600 6"/>
      <path d="M72.600 45c-2.200 0-2.400 1-2.400 2.600c0 2 .2 3-1.600 3c1.800 0 1.600 1.200 1.600 3c0 1.800.2 2.800 2.400 2.800" stroke-width="1.200"/>
      <path d="M88.800 45c2.200 0 2.400 1 2.400 2.600c0 2-.2 3 1.600 3c-1.800 0-1.600 1.200-1.600 3c0 1.800-.2 2.800-2.400 2.800" stroke-width="1.200"/>
      <path d="M110.600 44l2 4.900l5.300.4l-4.100 3.400l1.300 5.200l-4.500-2.800l-4.500 2.800l1.300-5.200l-4.100-3.400l5.300-.4z"/>
    </g>
    <text x="4.600" y="9.900" font-family="Liberation Sans" font-weight="700" font-size="6.200" fill="#3B78C2">A</text></svg>
<svg class="b" style="left:880.0px;top:70.0px;" width="31.0" height="31.0" viewBox="0 0 31.00 31.00"><rect x="10.400" y="5.800" width="12.600" height="12.600" fill="#EDC36E"/><rect x="6.200" y="15" width="9.800" height="9.800" fill="#EDC36E"/>
      <rect x="2.600" y="2.600" width="10.800" height="10.800" fill="#fff" stroke="#777" stroke-width="1.100"/><rect x="17.400" y="17.600" width="10.800" height="10.800" fill="#fff" stroke="#777" stroke-width="1.100"/></svg>
<span class="t" style="left:870.4px;top:105.1px;font-size:12px;line-height:16px;color:#262626;transform:scaleX(0.9604);">Organizar</span>
<svg class="b" style="left:892.8px;top:127.4px" width="5.2" height="2.8" viewBox="0 0 5.2 2.8"><path d="M0 0h5.2l-2.6 2.8z" fill="#666"/></svg>
<svg class="b" style="left:935.0px;top:71.0px;" width="33.0" height="33.0" viewBox="0 0 33.00 33.00"><rect x="2.600" y="2.400" width="25" height="25.600" rx="5" fill="#F1EEF3" stroke="#CFCFCF" stroke-width="1.200"/>
      <path d="M29.800 9.600l1.600 1.600l-9 11.400l-2.600-2.600z" fill="#BDBDBD"/><path d="M18.600 21l3.200 3.200c-1.400 3.600-7 5.600-13 5.200c4.600-1.600 5-6.600 9.800-8.400z" fill="#C4C4C4"/>
      <path d="M19.600 21.600l2 2" stroke="#F1EEF3" stroke-width="1"/></svg>
<span class="t" style="left:933.3px;top:105.1px;font-size:12px;line-height:16px;color:#B1B1B1;transform:scaleX(0.9252);">Estilos</span>
<span class="t" style="left:926.5px;top:120.7px;font-size:12px;line-height:16px;color:#B1B1B1;transform:scaleX(0.9910);">rápidos</span>
<svg class="b" style="left:968.0px;top:127.8px" width="5.2" height="2.8" viewBox="0 0 5.2 2.8"><path d="M0 0h5.2l-2.6 2.8z" fill="#B9B9B9"/></svg>
<svg class="b" style="left:978.0px;top:69.0px;" width="19.0" height="19.0" viewBox="0 0 19.00 19.00"><path d="M5.600 6.400l5-3.600l6.200 6.400l-6.600 4.400z" fill="#fff" stroke="#B4B4B4" stroke-width="1.100"/><path d="M8.400 4.200v-2.600h2.400v3.800" fill="none" stroke="#B4B4B4" stroke-width="1"/>
      <path d="M16.200 10.400c1.600 2.200 1.600 3.200.8 3.800c-.8.400-1.600-.4-.8-3.800z" fill="#B4B4B4"/><rect x="1.800" y="14.800" width="15.200" height="2.800" fill="#E3DCE3"/></svg>
<span class="t" style="left:998.5px;top:71.1px;font-size:12px;line-height:16px;color:#B1B1B1;transform:scaleX(0.9762);">Relleno de forma</span>
<svg class="b" style="left:1090.6px;top:77.8px" width="5.2" height="2.8" viewBox="0 0 5.2 2.8"><path d="M0 0h5.2l-2.6 2.8z" fill="#B9B9B9"/></svg>
<svg class="b" style="left:978.0px;top:92.0px;" width="19.0" height="18.0" viewBox="0 0 19.00 18.00"><path d="M9 3h-7v10.600h11.400v-4.600" fill="none" stroke="#B4B4B4" stroke-width="1.100"/>
      <path d="M7 11.200l.8-3l6.400-6.400l2.200 2.200l-6.400 6.400z" fill="#C4C4C4"/></svg>
<span class="t" style="left:998.5px;top:94.1px;font-size:12px;line-height:16px;color:#B1B1B1;letter-spacing:0.091px;">Contorno de forma</span>
<svg class="b" style="left:1102.9px;top:100.8px" width="5.2" height="2.8" viewBox="0 0 5.2 2.8"><path d="M0 0h5.2l-2.6 2.8z" fill="#B9B9B9"/></svg>
<svg class="b" style="left:978.0px;top:115.0px;" width="19.0" height="18.0" viewBox="0 0 19.00 18.00"><path d="M5.400 4h9.400c1.600 0 2.400 1 2 2.400l-1.600 5.400c-.4 1.400-1.400 2.200-3 2.200h-8.400c-1.800 0-2.600-1.200-2.200-2.600l1.400-5c.4-1.600 1-2.400 2.400-2.400z" fill="#D2D2D2"/>
      <path d="M6 5h8.600c1 0 1.400.6 1.200 1.400l-1 3.600c-.2 1-.8 1.400-1.800 1.400h-8c-1 0-1.400-.6-1.200-1.400l1-3.600c.2-1 .6-1.400 1.200-1.400z" fill="#F0ECF2"/></svg>
<span class="t" style="left:998.5px;top:117.3px;font-size:12px;line-height:16px;color:#B1B1B1;transform:scaleX(0.9724);">Efectos de forma</span>
<svg class="b" style="left:1090.0px;top:124.0px" width="5.2" height="2.8" viewBox="0 0 5.2 2.8"><path d="M0 0h5.2l-2.6 2.8z" fill="#B9B9B9"/></svg>
<span class="t" style="left:894.3px;top:140.4px;font-size:12px;line-height:16px;color:#3C3C3C;transform:scaleX(0.9965);">Dibujo</span>
<svg class="b" style="left:1109.0px;top:144.0px;" width="8.0" height="8.0" viewBox="0 0 8.00 8.00"><path d="M0.500 3.500v-3h3M3.200 3.200l4 4M7.500 4.200v3.300h-3.300" fill="none" stroke="#8C8C8C" stroke-width="1"/></svg>
<svg class="b" style="left:1131.0px;top:70.0px;" width="18.0" height="18.0" viewBox="0 0 18.00 18.00"><circle cx="10.400" cy="6.800" r="4.200" fill="#fff" stroke="#3B78C2" stroke-width="1.700"/><path d="M7.200 10l-4.600 4.400" stroke="#3B78C2" stroke-width="2.200" stroke-linecap="round"/></svg>
<span class="t" style="left:1151.6px;top:71.1px;font-size:12px;line-height:16px;color:#262626;transform:scaleX(0.9211);">Buscar</span>
<svg class="b" style="left:1130.0px;top:92.0px;" width="19.0" height="19.0" viewBox="0 0 19.00 19.00"><g font-family="Liberation Sans" font-size="11"><text x="1.400" y="8.600" fill="#444">a</text><text x="7.600" y="8.600" fill="#9344B8">b</text><text x="5.800" y="17.600" fill="#444">a</text><text x="11.800" y="17.600" fill="#3B78C2">c</text></g>
      <path d="M1.800 10.800v3.200h2.600M3.200 12.400l1.600 1.600l-1.600 1.600" fill="none" stroke="#3B78C2" stroke-width="1.100"/></svg>
<span class="t" style="left:1151.6px;top:94.1px;font-size:12px;line-height:16px;color:#262626;transform:scaleX(0.9291);">Reemplazar</span>
<svg class="b" style="left:1221.8px;top:100.6px" width="5.2" height="2.8" viewBox="0 0 5.2 2.8"><path d="M0 0h5.2l-2.6 2.8z" fill="#555"/></svg>
<svg class="b" style="left:1133.0px;top:114.0px;" width="16.0" height="19.0" viewBox="0 0 16.00 19.00"><path d="M3.200 2.600v12l3-2.800l2 4.400l1.800-.8l-2-4.200h4z" fill="#fff" stroke="#555" stroke-width="1.100" stroke-linejoin="round"/></svg>
<span class="t" style="left:1151.6px;top:117.3px;font-size:12px;line-height:16px;color:#262626;transform:scaleX(0.9474);">Seleccionar</span>
<svg class="b" style="left:1213.7px;top:124.0px" width="5.2" height="2.8" viewBox="0 0 5.2 2.8"><path d="M0 0h5.2l-2.6 2.8z" fill="#555"/></svg>
<span class="t" style="left:1161.5px;top:140.4px;font-size:12px;line-height:16px;color:#3C3C3C;transform:scaleX(0.9376);">Edición</span>
<svg class="b" style="left:1346.0px;top:144.0px;" width="13.0" height="9.0" viewBox="0 0 13.00 9.00"><path d="M1.200 7.400l5.200-5.200l5.200 5.200" fill="none" stroke="#555" stroke-width="1.200"/></svg>
<!-- s_panel -->
<div class="b" style="left:196.4px;top:158.0px;width:14.6px;height:547.6px;background:#DADADA;"></div>
<div class="b" style="left:196.4px;top:159.0px;width:14.6px;height:14.6px;background:#fff;border:1px solid #ABABAB;"></div>
<svg class="b" style="left:200.0px;top:163.5px;" width="8.0" height="5.5" viewBox="0 0 8.00 5.50"><path d="M0.500 5h6.600l-3.300-4.200z" fill="#777"/></svg>
<div class="b" style="left:196.4px;top:174.7px;width:14.6px;height:132.6px;background:#fff;border:1px solid #ABABAB;"></div>
<div class="b" style="left:196.6px;top:689.4px;width:14.4px;height:13.8px;background:#fff;border:1px solid #ABABAB;"></div>
<svg class="b" style="left:200.0px;top:693.5px;" width="8.0" height="5.5" viewBox="0 0 8.00 5.50"><path d="M0.500 0.600h6.600l-3.300 4.200z" fill="#777"/></svg>
<div class="b" style="left:215.0px;top:159.0px;width:1.0px;height:547.0px;background:#C6C6C6;"></div>
<span class="t" style="left:13.4px;top:170.5px;font-size:16px;line-height:21px;color:#444;">1</span>
<span class="t" style="left:13.4px;top:269.5px;font-size:16px;line-height:21px;color:#444;">2</span>
<span class="t" style="left:13.4px;top:466.9px;font-size:16px;line-height:21px;color:#444;">4</span>
<span class="t" style="left:13.4px;top:566.0px;font-size:16px;line-height:21px;color:#444;">5</span>
<span class="t" style="left:13.4px;top:664.5px;font-size:16px;line-height:21px;color:#444;">6</span>
<span class="t" style="left:13.4px;top:367.5px;font-size:16px;line-height:21px;color:#D24726;">3</span>
<svg class="b" style="left:30.0px;top:170.0px;" width="150.0" height="90.0" viewBox="0 0 1280 768"><defs><filter id="bl" x="-5%" y="-5%" width="110%" height="110%"><feGaussianBlur stdDeviation="2.2"/></filter><filter id="bl2" x="-5%" y="-5%" width="110%" height="110%"><feGaussianBlur stdDeviation="1.2"/></filter><linearGradient id="t1o" x1="1" y1="0" x2="0" y2="1"><stop offset="0" stop-color="#EA8A38"/><stop offset=".45" stop-color="#DF7540"/><stop offset="1" stop-color="#D96B45"/></linearGradient><clipPath id="t1c"><rect x="50" y="58" width="1172" height="658"/></clipPath></defs><g clip-path="url(#t1c)"><g filter="url(#bl)"><rect x="40" y="50" width="640" height="676" fill="#A9A5A1" /><rect x="40" y="50" width="640" height="280" fill="#6F6B66" /><rect x="50" y="58" width="60" height="242" fill="#4E545A" /><rect x="70" y="95" width="35" height="75" fill="#8FA0A8" /><rect x="110" y="58" width="82" height="212" fill="#B9AD97" /><rect x="192" y="58" width="100" height="272" fill="#25262A" /><rect x="292" y="58" width="46" height="362" fill="#E4E2DE" /><rect x="338" y="58" width="62" height="272" fill="#5A5B4E" /><rect x="372" y="130" width="28" height="260" fill="#2F5B44" /><rect x="400" y="58" width="198" height="88" fill="#C6212D" /><rect x="420" y="78" width="140" height="10" fill="#E9A0A4" /><rect x="430" y="104" width="110" height="8" fill="#E9A0A4" /><rect x="400" y="146" width="198" height="40" fill="#3C3F42" /><rect x="420" y="158" width="140" height="16" fill="#9A9C9C" /><rect x="400" y="186" width="198" height="134" fill="#2B2B28" /><rect x="500" y="190" width="80" height="16" fill="#B9B4A0" /><polygon points="50,440 330,330 340,520 50,640" fill="#BDB8B0"/><rect x="50" y="585" width="90" height="55" fill="#C9C1B3" /><rect x="590" y="265" width="65" height="165" fill="#2C2F3A" /><rect x="610" y="420" width="50" height="200" fill="#1E1F24" /><rect x="622" y="628" width="38" height="30" fill="#3B6FC4" /><ellipse cx="548" cy="285" rx="16" ry="20" fill="#B58D78"/><rect x="530" y="300" width="45" height="60" fill="#5A6578" /><rect x="556" y="440" width="20" height="58" fill="#3A4D70" /><ellipse cx="208" cy="212" rx="31" ry="40" fill="#C49A82"/><ellipse cx="209" cy="188" rx="32" ry="19" fill="#E9E3DA"/><rect x="182" y="218" width="54" height="36" fill="#3E9FD6" rx="10"/><path d="M150 262 Q208 236 262 262 L296 400 L286 452 L262 440 L254 448 H150 L142 440 L112 440 L96 400z" fill="#1D3566"/><rect x="146" y="306" width="104" height="24" fill="#DDE4F0" /><rect x="146" y="318" width="104" height="14" fill="#3C63B8" /><path d="M142 444h120l-6 250h-44l-12-170l-14 170h-44z" fill="#4B5F80"/><rect x="150" y="680" width="46" height="28" fill="#2A2A2E" /><rect x="200" y="686" width="46" height="26" fill="#2A2A2E" /><polygon points="78,440 134,452 130,572 56,548" fill="#2C97D4"/><rect x="268" y="486" width="30" height="60" fill="#5A3A2C" /><ellipse cx="486" cy="252" rx="30" ry="38" fill="#C8CED4"/><ellipse cx="486" cy="232" rx="30" ry="18" fill="#E8E8E8"/><rect x="462" y="258" width="50" height="34" fill="#3E9FD6" rx="10"/><path d="M430 300 Q486 284 546 300 L584 440 L566 468 L540 440 H438 L418 470 L400 450z" fill="#E6A3AE"/><path d="M448 300 Q488 292 532 300 L540 440 H446z" fill="#9AA4BE"/><path d="M446 428h100l-6 46q-44 22-88 0z" fill="#2852A6"/><path d="M440 470h104l-8 220h-38l-12-150l-8 150h-30z" fill="#486A98"/><rect x="468" y="664" width="32" height="48" fill="#2E4A2E" /><rect x="500" y="676" width="28" height="28" fill="#2F6FC0" /><rect x="372" y="490" width="12" height="110" fill="#6A2A2A" /><rect x="432" y="490" width="12" height="110" fill="#6A2A2A" /><rect x="338" y="562" width="124" height="88" fill="#E17326" rx="16"/><rect x="346" y="566" width="110" height="46" fill="#3F9FD8" rx="10"/><circle cx="366" cy="672" r="12" fill="#222"/><circle cx="442" cy="672" r="12" fill="#222"/></g><polygon points="650,58 1222,58 1222,716 720,716" fill="url(#t1o)"/><polygon points="632,58 650,58 722,716 700,716" fill="#1C1A1A" filter="url(#bl2)"/><polygon points="598,58 632,58 700,716 668,716" fill="#F0832B" filter="url(#bl2)"/><g filter="url(#bl2)"><circle cx="1002" cy="120" r="36" fill="#FBEFE6"/><path d="M980 100l44 40M1024 100l-44 40M1002 86v68" stroke="#E58C5A" stroke-width="5"/><rect x="1056" y="92" width="128" height="36" fill="#F8D8C4" opacity=".82"/><rect x="1056" y="138" width="128" height="12" fill="#F0B394" opacity=".8"/><rect x="690" y="337" width="486" height="22" fill="#FFF2EC" opacity=".72"/><rect x="720" y="374" width="430" height="22" fill="#FFF2EC" opacity=".72"/><rect x="830" y="469" width="210" height="9" fill="#FFF2EC" opacity=".8"/></g></g><rect x="50" y="58" width="1172" height="658" fill="none" stroke="#BEBEBE" stroke-width="4"/></svg>
<svg class="b" style="left:30.0px;top:270.0px;" width="150.0" height="90.0" viewBox="0 0 1280 768"><defs><filter id="bl" x="-5%" y="-5%" width="110%" height="110%"><feGaussianBlur stdDeviation="2.2"/></filter><filter id="bl2" x="-5%" y="-5%" width="110%" height="110%"><feGaussianBlur stdDeviation="1.2"/></filter><linearGradient id="og" x1="0" y1="0" x2="0" y2="1"><stop offset="0" stop-color="#EE8D1C"/><stop offset="1" stop-color="#DC680F"/></linearGradient></defs><rect x="47" y="45" width="1178" height="667" fill="#F8F8F8" stroke="#BEBEBE" stroke-width="5"/><rect x="53" y="52" width="282" height="52" fill="#000" opacity=".18" filter="url(#bl2)"/><rect x="50" y="48" width="282" height="52" fill="url(#og)"/><rect x="88" y="56" width="192" height="22" rx="4" fill="#fff" opacity=".78" filter="url(#bl2)"/><g filter="url(#bl2)"><rect x="205" y="305" width="35" height="60" fill="#E2E2E2" /><rect x="205" y="395" width="35" height="55" fill="#E2E2E2" /><rect x="258" y="324" width="232" height="16" fill="#5F6068" opacity=".8"/><rect x="258" y="419" width="272" height="16" fill="#5F6068" opacity=".8"/><rect x="655" y="316" width="445" height="18" fill="#2E3038" opacity=".9"/><rect x="655" y="410" width="255" height="17" fill="#2E3038" opacity=".9"/><circle cx="88" cy="674" r="19" fill="#F5831F"/><path d="M78 665l20 18M98 665l-20 18M88 657v34" stroke="#FBD9B8" stroke-width="3"/><rect x="120" y="658" width="68" height="11" fill="#8A8A8A" opacity=".7"/><rect x="120" y="677" width="68" height="4" fill="#BDBDBD" /><rect x="195" y="664" width="395" height="11" fill="#9A9A9A" opacity=".75"/><rect x="1195" y="677" width="15" height="6" fill="#999" /></g></svg>
<div class="b" style="left:32.0px;top:370.5px;width:145.1px;height:85.4px;background:#F8F8F8;border:3px solid #750B0B;"></div>
<div class="c" style="left:35px;top:373.6px;width:139.1px;height:79.3px;background:#F8F8F8"><div style="position:absolute;left:0;top:0;width:879px;height:495px;transform:scale(0.15813,0.16020);transform-origin:0 0">
<div class="b" style="left:0.0px;top:0.0px;width:214.0px;height:40.0px;background:linear-gradient(#EE8D1C,#E77A15 55%,#DC680F);border-bottom-right-radius:6px;box-shadow:2px 3px 6px rgba(0,0,0,.28);"></div>
<span class="t" style="left:16.0px;top:-1.1px;font-size:22.5px;line-height:29px;color:#fff;letter-spacing:0.330px;-webkit-text-stroke:.35px #fff;text-shadow:0 1px 1px rgba(160,70,0,.5);">Gastos Médicos</span>
<span class="t" style="left:259.4px;top:0.9px;font-size:21.5px;line-height:28px;color:#4D545E;font-weight:700;letter-spacing:0.889px;">31,773</span>
<span class="t" style="left:337.4px;top:0.4px;font-size:22.5px;line-height:29px;color:#4D545E;transform:scaleX(0.8677);">casos</span>
<span class="t" style="left:394.7px;top:0.4px;font-size:22.5px;line-height:29px;color:#4D545E;transform:scaleX(0.9271);">asegurados</span>
<span class="t" style="left:509.5px;top:0.4px;font-size:22.5px;line-height:29px;color:#4D545E;transform:scaleX(0.8991);">de</span>
<span class="t" style="left:540.1px;top:0.4px;font-size:22.5px;line-height:29px;color:#4D545E;transform:scaleX(0.9264);">Covid-19,</span>
<span class="t" style="left:636.3px;top:0.4px;font-size:22.5px;line-height:29px;color:#4D545E;transform:scaleX(0.9097);">con</span>
<span class="t" style="left:676.1px;top:0.4px;font-size:22.5px;line-height:29px;color:#4D545E;transform:scaleX(0.8352);">un</span>
<span class="t" style="left:704.6px;top:0.4px;font-size:22.5px;line-height:29px;color:#4D545E;transform:scaleX(0.8963);">costo</span>
<span class="t" style="left:761.4px;top:0.4px;font-size:22.5px;line-height:29px;color:#4D545E;transform:scaleX(0.9819);">promedio</span>
<span class="t" style="left:373.2px;top:28.6px;font-size:22.5px;line-height:29px;color:#4D545E;transform:scaleX(0.9111);">de</span>
<span class="t" style="left:404.1px;top:29.1px;font-size:21.5px;line-height:28px;color:#4D545E;font-weight:700;letter-spacing:0.919px;">$459,914</span>
<span class="t" style="left:508.2px;top:28.6px;font-size:22.5px;line-height:29px;color:#4D545E;transform:scaleX(0.8672);">en</span>
<span class="t" style="left:537.2px;top:28.6px;font-size:22.5px;line-height:29px;color:#4D545E;transform:scaleX(0.9229);">atención</span>
<span class="t" style="left:623.3px;top:28.6px;font-size:22.5px;line-height:29px;color:#4D545E;transform:scaleX(0.9369);">hospitalaria</span>
<span class="t" style="left:37.0px;top:74.7px;font-size:11.3px;line-height:15px;color:#4D545E;transform:scaleX(0.9957);">MONTO ACUMULADO (EN MILLONES DE PESOS)</span>
<span class="t" style="left:104.0px;top:94.1px;font-size:10.3px;line-height:13px;color:#4D545E;transform:scaleX(0.9510);">TENDENCIA</span>
<div class="b" style="left:173.0px;top:99.0px;width:25.0px;height:6.0px;background:#B8601E;"></div>
<div class="b" style="left:16.0px;top:202.0px;width:42.0px;height:186.7px;background:#FFAC00;box-shadow:2.500px 0 2.500px rgba(60,60,70,.42);"></div>
<div class="b" style="left:16.0px;top:202.0px;width:42.0px;height:6.5px;background:linear-gradient(#FFDA2E,#FCD42C 55%,#B89A24);"></div>
<div class="b" style="left:62.0px;top:193.9px;width:42.0px;height:194.8px;background:#FFAC00;box-shadow:2.500px 0 2.500px rgba(60,60,70,.42);"></div>
<div class="b" style="left:62.0px;top:193.9px;width:42.0px;height:7.7px;background:linear-gradient(#FFDA2E,#FCD42C 55%,#B89A24);"></div>
<div class="b" style="left:109.0px;top:189.2px;width:42.2px;height:199.5px;background:#FFAC00;box-shadow:2.500px 0 2.500px rgba(60,60,70,.42);"></div>
<div class="b" style="left:109.0px;top:189.2px;width:42.2px;height:4.4px;background:linear-gradient(#FFDA2E,#FCD42C 55%,#B89A24);"></div>
<div class="b" style="left:155.0px;top:187.7px;width:42.0px;height:201.0px;background:#FFAC00;box-shadow:2.500px 0 2.500px rgba(60,60,70,.42);"></div>
<div class="b" style="left:155.0px;top:187.7px;width:42.0px;height:1.1px;background:linear-gradient(#FFDA2E,#FCD42C 55%,#B89A24);"></div>
<div class="b" style="left:201.0px;top:174.9px;width:42.0px;height:213.8px;background:#FFAC00;box-shadow:2.500px 0 2.500px rgba(60,60,70,.42);"></div>
<div class="b" style="left:201.0px;top:174.9px;width:42.0px;height:12.7px;background:linear-gradient(#FFDA2E,#FCD42C 55%,#B89A24);"></div>
<div class="b" style="left:247.2px;top:171.9px;width:42.8px;height:216.8px;background:#FFAC00;box-shadow:2.500px 0 2.500px rgba(60,60,70,.42);"></div>
<div class="b" style="left:247.2px;top:171.9px;width:42.8px;height:3.0px;background:linear-gradient(#FFDA2E,#FCD42C 55%,#B89A24);"></div>
<div class="b" style="left:294.0px;top:167.8px;width:42.0px;height:220.9px;background:#FFAC00;box-shadow:2.500px 0 2.500px rgba(60,60,70,.42);"></div>
<div class="b" style="left:294.0px;top:167.8px;width:42.0px;height:3.8px;background:linear-gradient(#FFDA2E,#FCD42C 55%,#B89A24);"></div>
<div class="b" style="left:340.2px;top:166.0px;width:42.0px;height:222.7px;background:#FFAC00;box-shadow:2.500px 0 2.500px rgba(60,60,70,.42);"></div>
<div class="b" style="left:340.2px;top:166.0px;width:42.0px;height:1.8px;background:linear-gradient(#FFDA2E,#FCD42C 55%,#B89A24);"></div>
<svg class="b" style="left:0.0px;top:0.0px;" width="879.0" height="495.0" viewBox="0 0 879 495"><path d="M39.7 279.1 L86.5 265.2 L133.4 256.9 L181.0 255.7 L228.9 232.3 L276.0 226.6 L323.4 220.3 L371.7 216.5" fill="none" stroke="#B95D14" stroke-width="6" stroke-linejoin="round"/></svg>
<span class="t" style="left:17.0px;top:177.8px;font-size:12px;line-height:16px;color:#4D545E;transform:scaleX(0.8778);">12,433.4</span>
<span class="t" style="left:67.5px;top:172.7px;font-size:12px;line-height:16px;color:#4D545E;transform:scaleX(0.8774);">12,757</span>
<span class="t" style="left:109.7px;top:160.8px;font-size:12px;line-height:16px;color:#4D545E;transform:scaleX(0.8774);">12,812</span>
<span class="t" style="left:150.2px;top:154.8px;font-size:12px;line-height:16px;color:#4D545E;transform:scaleX(0.8778);">13,672.2</span>
<span class="t" style="left:201.0px;top:151.5px;font-size:12px;line-height:16px;color:#4D545E;transform:scaleX(0.8778);">13,869.3</span>
<span class="t" style="left:253.0px;top:141.7px;font-size:12px;line-height:16px;color:#4D545E;transform:scaleX(0.8801);">14,122</span>
<span class="t" style="left:292.0px;top:135.8px;font-size:12px;line-height:16px;color:#4D545E;transform:scaleX(0.8778);">14,255.5</span>
<span class="t" style="left:338.3px;top:134.7px;font-size:11.2px;line-height:15px;color:#4D545E;font-weight:700;letter-spacing:0.301px;">14,612.8</span>
<span class="t" style="left:21.0px;top:193.0px;font-size:10.8px;line-height:14px;color:#4D545E;font-weight:700;letter-spacing:0.844px;text-shadow:0 1.500px 1.500px rgba(0,0,0,.28);">427.0</span>
<span class="t" style="left:67.5px;top:186.3px;font-size:10.8px;line-height:14px;color:#4D545E;font-weight:700;letter-spacing:0.869px;text-shadow:0 1.500px 1.500px rgba(0,0,0,.28);">526.0</span>
<span class="t" style="left:114.0px;top:177.0px;font-size:10.8px;line-height:14px;color:#4D545E;font-weight:700;letter-spacing:0.844px;text-shadow:0 1.500px 1.500px rgba(0,0,0,.28);">323.6</span>
<span class="t" style="left:163.8px;top:173.3px;font-size:10.8px;line-height:14px;color:#4D545E;font-weight:700;letter-spacing:0.761px;text-shadow:0 1.500px 1.500px rgba(0,0,0,.28);">55.0</span>
<span class="t" style="left:207.0px;top:172.0px;font-size:10.8px;line-height:14px;color:#4D545E;font-weight:700;letter-spacing:0.669px;text-shadow:0 1.500px 1.500px rgba(0,0,0,.28);">860.0</span>
<span class="t" style="left:253.0px;top:159.2px;font-size:10.8px;line-height:14px;color:#4D545E;font-weight:700;letter-spacing:0.594px;text-shadow:0 1.500px 1.500px rgba(0,0,0,.28);">197.1</span>
<span class="t" style="left:299.0px;top:155.8px;font-size:10.8px;line-height:14px;color:#4D545E;font-weight:700;letter-spacing:0.869px;text-shadow:0 1.500px 1.500px rgba(0,0,0,.28);">252.7</span>
<span class="t" style="left:346.0px;top:152.5px;font-size:10.8px;line-height:14px;color:#4D545E;font-weight:700;letter-spacing:0.694px;text-shadow:0 1.500px 1.500px rgba(0,0,0,.28);">133.5</span>
<span class="t" style="left:15.5px;top:289.8px;font-size:10.2px;line-height:13px;color:#fff;font-weight:700;letter-spacing:0.480px;text-shadow:0 1.500px 0 #4A3400,0.500px 2.500px 1.200px #4A3400;">11,480.4</span>
<span class="t" style="left:61.0px;top:287.7px;font-size:10.2px;line-height:13px;color:#fff;font-weight:700;letter-spacing:0.466px;text-shadow:0 1.500px 0 #4A3400,0.500px 2.500px 1.200px #4A3400;">11,907.4</span>
<span class="t" style="left:106.3px;top:283.9px;font-size:10.2px;line-height:13px;color:#fff;font-weight:700;letter-spacing:0.600px;text-shadow:0 1.500px 0 #4A3400,0.500px 2.500px 1.200px #4A3400;">12,433.4</span>
<span class="t" style="left:152.4px;top:282.3px;font-size:10.2px;line-height:13px;color:#fff;font-weight:700;letter-spacing:0.600px;text-shadow:0 1.500px 0 #4A3400,0.500px 2.500px 1.200px #4A3400;">12,757.0</span>
<span class="t" style="left:199.0px;top:282.3px;font-size:10.2px;line-height:13px;color:#fff;font-weight:700;letter-spacing:0.600px;text-shadow:0 1.500px 0 #4A3400,0.500px 2.500px 1.200px #4A3400;">12,812.0</span>
<span class="t" style="left:246.5px;top:273.7px;font-size:10.2px;line-height:13px;color:#fff;font-weight:700;letter-spacing:0.600px;text-shadow:0 1.500px 0 #4A3400,0.500px 2.500px 1.200px #4A3400;">13,672.2</span>
<span class="t" style="left:292.6px;top:272.9px;font-size:10.2px;line-height:13px;color:#fff;font-weight:700;letter-spacing:0.500px;text-shadow:0 1.500px 0 #4A3400,0.500px 2.500px 1.200px #4A3400;">13,869.3</span>
<span class="t" style="left:340.2px;top:271.4px;font-size:10.2px;line-height:13px;color:#fff;font-weight:700;letter-spacing:0.400px;text-shadow:0 1.500px 0 #4A3400,0.500px 2.500px 1.200px #4A3400;">14,122.0</span>
<span class="t" style="left:29.5px;top:398.5px;font-size:11.2px;line-height:15px;color:#4D545E;font-weight:700;letter-spacing:1.044px;">01</span>
<span class="t" style="left:76.0px;top:398.5px;font-size:11.2px;line-height:15px;color:#4D545E;font-weight:700;letter-spacing:0.943px;">08</span>
<span class="t" style="left:123.3px;top:398.5px;font-size:11.2px;line-height:15px;color:#4D545E;font-weight:700;letter-spacing:0.743px;">15</span>
<span class="t" style="left:170.0px;top:398.5px;font-size:11.2px;line-height:15px;color:#4D545E;font-weight:700;letter-spacing:0.843px;">22</span>
<span class="t" style="left:214.6px;top:396.8px;font-size:11.2px;line-height:15px;color:#4D545E;font-weight:700;letter-spacing:1.144px;">28</span>
<span class="t" style="left:263.4px;top:398.5px;font-size:11.2px;line-height:15px;color:#C2611C;font-weight:700;letter-spacing:1.344px;">05</span>
<span class="t" style="left:311.6px;top:398.5px;font-size:11.2px;line-height:15px;color:#C2611C;font-weight:700;letter-spacing:0.943px;">12</span>
<span class="t" style="left:354.2px;top:398.5px;font-size:11.2px;line-height:15px;color:#C2611C;font-weight:700;letter-spacing:0.743px;">19</span>
<div class="b" style="left:15.5px;top:420.8px;width:222.0px;height:1.2px;background:#111;"></div>
<div class="b" style="left:250.5px;top:420.8px;width:137.1px;height:1.2px;background:#C2611C;"></div>
<span class="t" style="left:110.2px;top:422.6px;font-size:12.3px;line-height:16px;color:#4D545E;transform:scaleX(0.9029);">MARZO</span>
<span class="t" style="left:303.0px;top:422.7px;font-size:11.5px;line-height:15px;color:#C2611C;transform:scaleX(0.9327);-webkit-text-stroke:.3px #C2611C;">ABRIL</span>
<span class="t" style="left:149.7px;top:442.3px;font-size:10.3px;line-height:13px;color:#3F4650;transform:scaleX(0.9508);-webkit-text-stroke:.25px #3F4650;">ÚLTIMAS 8 SEMANAS</span>
<svg class="b" style="left:7.0px;top:453.0px;" width="33.0" height="31.0" viewBox="0 0 33 31"><path d="M0.860 15.400L8.540 1.900H24.650L31.970 15.400L24.650 29H8.540z" fill="#F5831F"/>
    <g fill="none" stroke="#F8F8F8" stroke-width="1.100" stroke-linejoin="miter">
      <path d="M16.230 1.900L12.570 8.300L16.600 15.500L20.620 22.550L16.960 29"/>
      <path d="M4.520 9.200L8.180 15.500H24.280L27.940 22.100"/>
      <path d="M27.500 8.640H19.900L16.600 15.500L12.570 21.800H5.250"/>
    </g></svg>
<span class="t" style="left:43.8px;top:448.9px;font-size:21.5px;line-height:28px;color:#6A6A6A;transform:scaleX(0.9969);font-weight:400;-webkit-text-stroke:.45px #F8F8F8;">AMIS</span>
<span class="t" style="left:43.6px;top:473.3px;font-size:3.6px;line-height:5px;color:#9A9A9A;letter-spacing:0.190px;">ASOCIACIÓN MEXICANA DE</span>
<span class="t" style="left:43.6px;top:477.7px;font-size:3.6px;line-height:5px;color:#9A9A9A;transform:scaleX(0.9885);">INSTITUCIONES DE SEGUROS</span>
<span class="t" style="left:103.0px;top:461.1px;font-size:10.3px;line-height:13px;color:#A9A9A9;transform:scaleX(0.9517);">REPORTE DE CASOS COVID 19 EN POBLACIÓN ASEGURADA</span>
<div class="b" style="left:398.0px;top:188.7px;width:147.0px;height:8.0px;background:radial-gradient(ellipse at 50% 45%,rgba(0,0,0,.5) 0,rgba(0,0,0,.26) 40%,rgba(0,0,0,0) 70%);"></div>
<div class="b" style="left:414.8px;top:124.5px;width:113.2px;height:68.7px;background:linear-gradient(#F8F8F8 0,#F1F1F2 25%,#E9E9EB 60%,#E0E1E3 100%);"></div>
<div class="b" style="left:398.0px;top:281.5px;width:147.0px;height:8.0px;background:radial-gradient(ellipse at 50% 45%,rgba(0,0,0,.5) 0,rgba(0,0,0,.26) 40%,rgba(0,0,0,0) 70%);"></div>
<div class="b" style="left:414.8px;top:216.0px;width:113.2px;height:70.0px;background:linear-gradient(#F8F8F8 0,#F1F1F2 25%,#E9E9EB 60%,#E0E1E3 100%);"></div>
<div class="b" style="left:398.0px;top:374.5px;width:147.0px;height:8.0px;background:radial-gradient(ellipse at 50% 45%,rgba(0,0,0,.5) 0,rgba(0,0,0,.26) 40%,rgba(0,0,0,0) 70%);"></div>
<div class="b" style="left:414.8px;top:310.3px;width:113.2px;height:68.7px;background:linear-gradient(#F8F8F8 0,#F1F1F2 25%,#E9E9EB 60%,#E0E1E3 100%);"></div>
<span class="t" style="left:435.2px;top:136.5px;font-size:11.3px;line-height:15px;color:#4D545E;font-weight:700;letter-spacing:0.939px;">$29,041,114</span>
<span class="t" style="left:424.2px;top:148.9px;font-size:11.3px;line-height:15px;color:#4D545E;transform:scaleX(0.9915);">CASO DE MAYOR</span>
<span class="t" style="left:449.3px;top:161.8px;font-size:11.3px;line-height:15px;color:#4D545E;letter-spacing:0.513px;">MONTO</span>
<span class="t" style="left:458.7px;top:229.8px;font-size:11.3px;line-height:15px;color:#4D545E;font-weight:700;letter-spacing:0.392px;">89%</span>
<span class="t" style="left:438.8px;top:242.0px;font-size:11.3px;line-height:15px;color:#4D545E;letter-spacing:0.159px;">AVANCE DE</span>
<span class="t" style="left:418.1px;top:254.4px;font-size:11.3px;line-height:15px;color:#4D545E;letter-spacing:0.052px;">INDEMNIZACIONES</span>
<span class="t" style="left:443.5px;top:316.1px;font-size:11.3px;line-height:15px;color:#4D545E;font-weight:700;letter-spacing:1.053px;">$459,914</span>
<span class="t" style="left:419.4px;top:328.4px;font-size:11.3px;line-height:15px;color:#4D545E;transform:scaleX(0.9929);">COSTO PROMEDIO</span>
<span class="t" style="left:433.0px;top:341.0px;font-size:11.3px;line-height:15px;color:#4D545E;letter-spacing:0.024px;">DE ATENCIÓN</span>
<span class="t" style="left:431.3px;top:353.2px;font-size:11.3px;line-height:15px;color:#4D545E;transform:scaleX(0.9850);">HOSPITALARIA</span>
<span class="t" style="left:632.0px;top:73.7px;font-size:11.3px;line-height:15px;color:#4D545E;letter-spacing:0.022px;">NÚMERO ACUMULADO DE CASOS</span>
<span class="t" style="left:690.0px;top:94.1px;font-size:10.3px;line-height:13px;color:#4D545E;transform:scaleX(0.9527);">TENDENCIA</span>
<div class="b" style="left:759.2px;top:98.5px;width:24.8px;height:6.3px;background:#00470A;"></div>
<div class="b" style="left:558.2px;top:225.9px;width:37.0px;height:157.7px;box-shadow:1px -1px 3px rgba(0,0,0,.45);"></div>
<div class="b" style="left:595.2px;top:209.7px;width:36.8px;height:173.9px;box-shadow:1px -1px 3px rgba(0,0,0,.45);"></div>
<div class="b" style="left:632.0px;top:197.8px;width:37.0px;height:185.8px;box-shadow:1px -1px 3px rgba(0,0,0,.45);"></div>
<div class="b" style="left:669.0px;top:196.2px;width:36.3px;height:187.4px;box-shadow:1px -1px 3px rgba(0,0,0,.45);"></div>
<div class="b" style="left:705.3px;top:167.3px;width:36.7px;height:216.3px;box-shadow:1px -1px 3px rgba(0,0,0,.45);"></div>
<div class="b" style="left:742.0px;top:156.8px;width:37.0px;height:226.8px;box-shadow:1px -1px 3px rgba(0,0,0,.45);"></div>
<div class="b" style="left:779.0px;top:151.7px;width:36.9px;height:231.9px;box-shadow:1px -1px 3px rgba(0,0,0,.45);"></div>
<div class="b" style="left:815.9px;top:135.7px;width:37.0px;height:247.9px;box-shadow:1px -1px 3px rgba(0,0,0,.45);"></div>
<div class="b" style="left:558.2px;top:225.9px;width:37.3px;height:157.7px;background:linear-gradient(90deg,#5E8A2E 0,#7AA542 4px,#7AA542 100%);"></div>
<div class="b" style="left:595.2px;top:209.7px;width:37.1px;height:173.9px;background:linear-gradient(90deg,#5E8A2E 0,#7AA542 4px,#7AA542 100%);"></div>
<div class="b" style="left:632.0px;top:197.8px;width:37.3px;height:185.8px;background:linear-gradient(90deg,#5E8A2E 0,#7AA542 4px,#7AA542 100%);"></div>
<div class="b" style="left:669.0px;top:196.2px;width:36.6px;height:187.4px;background:linear-gradient(90deg,#5E8A2E 0,#7AA542 4px,#7AA542 100%);"></div>
<div class="b" style="left:705.3px;top:167.3px;width:37.0px;height:216.3px;background:linear-gradient(90deg,#5E8A2E 0,#7AA542 4px,#7AA542 100%);"></div>
<div class="b" style="left:742.0px;top:156.8px;width:37.3px;height:226.8px;background:linear-gradient(90deg,#004F12 0,#02691D 4px,#02691D 100%);"></div>
<div class="b" style="left:779.0px;top:151.7px;width:37.2px;height:231.9px;background:linear-gradient(90deg,#004F12 0,#02691D 4px,#02691D 100%);"></div>
<div class="b" style="left:815.9px;top:135.7px;width:37.3px;height:247.9px;background:linear-gradient(90deg,#004F12 0,#02691D 4px,#02691D 100%);"></div>
<svg class="b" style="left:0.0px;top:0.0px;" width="879.0" height="495.0" viewBox="0 0 879 495"><path d="M567.9 279.8 L607.6 275.0 L645.8 273.5 L685.9 261.3 L722.0 257.5 L760.9 255.0 L799.9 252.0 L844.4 248.3" fill="none" stroke="#063D08" stroke-width="7" stroke-linejoin="round"/></svg>
<span class="t" style="left:560.0px;top:209.4px;font-size:11.8px;line-height:15px;color:#4D545E;transform:scaleX(0.9089);text-shadow:0 1px 1.500px rgba(0,0,0,.35);">27,487</span>
<span class="t" style="left:597.0px;top:193.7px;font-size:11.8px;line-height:15px;color:#4D545E;transform:scaleX(0.9117);text-shadow:0 1px 1.500px rgba(0,0,0,.35);">28,233</span>
<span class="t" style="left:633.8px;top:180.8px;font-size:11.8px;line-height:15px;color:#4D545E;transform:scaleX(0.9089);text-shadow:0 1px 1.500px rgba(0,0,0,.35);">28,813</span>
<span class="t" style="left:670.2px;top:179.6px;font-size:11.8px;line-height:15px;color:#4D545E;transform:scaleX(0.9200);text-shadow:0 1px 1.500px rgba(0,0,0,.35);">28,916</span>
<span class="t" style="left:707.6px;top:151.2px;font-size:11.8px;line-height:15px;color:#4D545E;transform:scaleX(0.9089);text-shadow:0 1px 1.500px rgba(0,0,0,.35);">30,303</span>
<span class="t" style="left:743.9px;top:137.9px;font-size:11.8px;line-height:15px;color:#4D545E;transform:scaleX(0.9283);text-shadow:0 1px 1.500px rgba(0,0,0,.35);">30,768</span>
<span class="t" style="left:780.2px;top:135.1px;font-size:11.8px;line-height:15px;color:#4D545E;transform:scaleX(0.9283);text-shadow:0 1px 1.500px rgba(0,0,0,.35);">31,021</span>
<span class="t" style="left:815.9px;top:118.5px;font-size:11.2px;line-height:15px;color:#4D545E;font-weight:700;letter-spacing:0.449px;text-shadow:0 1px 1.500px rgba(0,0,0,.3);">31,773</span>
<span class="t" style="left:572.9px;top:391.2px;font-size:10.8px;line-height:14px;color:#4D545E;font-weight:700;letter-spacing:0.888px;">01</span>
<span class="t" style="left:608.2px;top:391.2px;font-size:10.8px;line-height:14px;color:#4D545E;font-weight:700;letter-spacing:1.188px;">08</span>
<span class="t" style="left:643.6px;top:391.2px;font-size:10.8px;line-height:14px;color:#4D545E;font-weight:700;letter-spacing:1.188px;">15</span>
<span class="t" style="left:678.7px;top:391.2px;font-size:10.8px;line-height:14px;color:#4D545E;font-weight:700;letter-spacing:1.388px;">22</span>
<span class="t" style="left:716.0px;top:391.2px;font-size:10.8px;line-height:14px;color:#4D545E;font-weight:700;letter-spacing:1.388px;">28</span>
<span class="t" style="left:758.8px;top:389.9px;font-size:10.8px;line-height:14px;color:#C2611C;font-weight:700;letter-spacing:1.188px;">05</span>
<span class="t" style="left:792.4px;top:391.2px;font-size:10.8px;line-height:14px;color:#C2611C;font-weight:700;letter-spacing:1.588px;">12</span>
<span class="t" style="left:829.7px;top:391.2px;font-size:10.8px;line-height:14px;color:#C2611C;font-weight:700;letter-spacing:1.188px;">19</span>
<span class="t" style="left:630.6px;top:406.7px;font-size:11.3px;line-height:15px;color:#4D545E;transform:scaleX(0.9754);">MARZO</span>
<span class="t" style="left:784.4px;top:406.7px;font-size:11.3px;line-height:15px;color:#C2611C;transform:scaleX(0.9461);-webkit-text-stroke:.3px #C2611C;">ABRIL</span>
<span class="t" style="left:683.4px;top:435.5px;font-size:10.3px;line-height:13px;color:#3F4650;transform:scaleX(0.9490);-webkit-text-stroke:.2px #3F4650;">ÚLTIMAS 8 SEMANAS</span>
<span class="t" style="left:472.1px;top:455.9px;font-size:9.8px;line-height:13px;color:#E2690E;font-weight:700;letter-spacing:0.217px;">DEFUNCIONES</span>
<span class="t" style="left:471.4px;top:467.1px;font-size:9.8px;line-height:13px;color:#E2690E;font-weight:700;letter-spacing:0.424px;">(ACUMULADO)</span>
<div class="b" style="left:559.7px;top:458.0px;width:306.6px;height:19.6px;background:#fff;border-radius:9px;box-shadow:0 1px 2px rgba(0,0,0,.06);"></div>
<span class="t" style="left:570.1px;top:457.7px;font-size:11.5px;line-height:15px;color:#E2690E;transform:scaleX(0.9974);">1,800</span>
<span class="t" style="left:607.7px;top:457.7px;font-size:11.5px;line-height:15px;color:#E2690E;transform:scaleX(0.9870);">1,920</span>
<span class="t" style="left:643.0px;top:457.7px;font-size:11.5px;line-height:15px;color:#E2690E;transform:scaleX(0.9974);">1,928</span>
<span class="t" style="left:677.9px;top:457.7px;font-size:11.5px;line-height:15px;color:#E2690E;transform:scaleX(0.9939);">2,044</span>
<span class="t" style="left:709.0px;top:457.7px;font-size:11.5px;line-height:15px;color:#E2690E;transform:scaleX(0.9765);">2,061</span>
<span class="t" style="left:745.9px;top:457.7px;font-size:11.5px;line-height:15px;color:#E2690E;transform:scaleX(0.9835);">2,086</span>
<span class="t" style="left:785.7px;top:458.8px;font-size:11.5px;line-height:15px;color:#E2690E;letter-spacing:0.081px;">2,088</span>
<span class="t" style="left:821.0px;top:458.8px;font-size:11.5px;line-height:15px;color:#E2690E;font-weight:700;letter-spacing:0.456px;">2,057</span>
<span class="t" style="left:866.6px;top:478.1px;font-size:10px;line-height:13px;color:#8A8A8A;transform:scaleX(0.9711);">3</span>
</div></div>
<div class="b" style="left:38.3px;top:440.8px;width:35.3px;height:1.1px;background:#111;"></div>
<div class="b" style="left:75.6px;top:440.8px;width:21.4px;height:1.1px;background:#C2611C;"></div>
<svg class="b" style="left:30.0px;top:467.0px;" width="150.0" height="90.0" viewBox="0 0 1280 768"><defs><filter id="bl" x="-5%" y="-5%" width="110%" height="110%"><feGaussianBlur stdDeviation="2.2"/></filter><filter id="bl2" x="-5%" y="-5%" width="110%" height="110%"><feGaussianBlur stdDeviation="1.2"/></filter><linearGradient id="og" x1="0" y1="0" x2="0" y2="1"><stop offset="0" stop-color="#EE8D1C"/><stop offset="1" stop-color="#DC680F"/></linearGradient><linearGradient id="lg4" x1="0" y1="0" x2="0" y2="1"><stop offset="0" stop-color="#F4F4F4"/><stop offset="1" stop-color="#DCDDDF"/></linearGradient></defs><rect x="47" y="55" width="1178" height="665" fill="#F8F8F8" stroke="#BEBEBE" stroke-width="5"/><rect x="53" y="62" width="282" height="52" fill="#000" opacity=".18" filter="url(#bl2)"/><rect x="50" y="58" width="282" height="52" fill="url(#og)"/><rect x="70" y="64" width="225" height="24" rx="4" fill="#fff" opacity=".78" filter="url(#bl2)"/><g filter="url(#bl2)"><rect x="470" y="70" width="525" height="24" fill="#2B2D33" opacity=".62"/><rect x="470" y="106" width="530" height="24" fill="#2B2D33" opacity=".62"/><path d="M175 198L245 218L340 252L356 232L396 240L440 300L470 282L502 300L522 362L562 380L556 440L576 520L612 546L642 560L622 572L586 552L560 530L540 470L510 430L470 400L440 420L420 450L440 482L430 512L400 522L384 492L410 470L400 440L380 440L340 380L310 370L290 330L250 300L222 250L246 300L230 312L200 270z" fill="#D22A0A"/><path d="M195 305L236 320L290 380L306 426L290 432L250 392L225 342z" fill="#BDBDBD"/><path d="M360 356L430 350L436 398L400 402L380 440L364 400z" fill="#BDBDBD"/><path d="M420 402L490 396L500 450L440 470L420 450z" fill="#E0E0E0"/><path d="M384 440L410 470L392 500L372 470z" fill="#C4C4C4"/><path d="M440 522L560 536L600 572L690 560L722 600L682 626L640 592L582 606L500 572L452 548z" fill="#B9B9B9"/><path d="M690 500L745 496L750 552L700 552z" fill="#BDBDBD"/><path d="M716 466L790 460L790 490L764 540L742 520L738 490L716 490z" fill="#8A4A1E"/><path d="M640 540L682 540L708 556L700 568L660 566z" fill="#E88030"/><path d="M430 526L458 530L456 552L432 548z" fill="#8A4A1E"/><circle cx="506" cy="494" r="58" fill="#EDEDED" opacity=".85"/><path d="M520 440l40 20l-4 40l-30-10z" fill="#E89080"/><path d="M470 500l40 10l-10 30l-30-6z" fill="#D8B8A0"/><circle cx="506" cy="494" r="62" fill="none" stroke="#2A2A2A" stroke-width="7" stroke-dasharray="12 7"/><path d="M880 215L940 210L950 270L900 300L872 270z" fill="#C4C4C4"/><path d="M930 230L960 222L970 260L1010 280L1000 300L940 295L915 285z" fill="#8A4A1E"/><path d="M925 295L1000 300L1040 330L1046 376L1000 380L965 365L955 335L925 325z" fill="#D22A0A"/><path d="M980 305L1012 300L1020 330L990 338z" fill="#E88030"/><circle cx="960" cy="300" r="122" fill="none" stroke="#2A2A2A" stroke-width="7" stroke-dasharray="16 10"/><rect x="88" y="180" width="98" height="8" fill="#33353B" opacity=".75"/><rect x="125" y="198" width="25" height="8" fill="#33353B" opacity=".75"/><rect x="268" y="194" width="50" height="8" fill="#33353B" opacity=".75"/><rect x="282" y="212" width="22" height="8" fill="#33353B" opacity=".75"/><rect x="370" y="210" width="74" height="8" fill="#33353B" opacity=".75"/><rect x="392" y="230" width="36" height="8" fill="#33353B" opacity=".75"/><rect x="474" y="254" width="60" height="8" fill="#33353B" opacity=".75"/><rect x="490" y="272" width="26" height="8" fill="#33353B" opacity=".75"/><rect x="522" y="322" width="84" height="8" fill="#33353B" opacity=".75"/><rect x="540" y="340" width="44" height="8" fill="#33353B" opacity=".75"/><rect x="572" y="382" width="82" height="8" fill="#33353B" opacity=".75"/><rect x="600" y="400" width="24" height="8" fill="#33353B" opacity=".75"/><rect x="104" y="366" width="128" height="8" fill="#33353B" opacity=".75"/><rect x="160" y="382" width="20" height="8" fill="#33353B" opacity=".75"/><rect x="308" y="418" width="44" height="8" fill="#33353B" opacity=".75"/><rect x="318" y="434" width="24" height="8" fill="#33353B" opacity=".75"/><rect x="312" y="460" width="44" height="8" fill="#33353B" opacity=".75"/><rect x="322" y="476" width="18" height="8" fill="#33353B" opacity=".75"/><rect x="316" y="510" width="40" height="8" fill="#33353B" opacity=".75"/><rect x="310" y="528" width="42" height="8" fill="#33353B" opacity=".75"/><rect x="366" y="536" width="38" height="8" fill="#33353B" opacity=".75"/><rect x="362" y="570" width="72" height="8" fill="#33353B" opacity=".75"/><rect x="384" y="596" width="28" height="8" fill="#33353B" opacity=".75"/><rect x="464" y="596" width="64" height="8" fill="#33353B" opacity=".75"/><rect x="490" y="614" width="18" height="8" fill="#33353B" opacity=".75"/><rect x="556" y="622" width="54" height="8" fill="#33353B" opacity=".75"/><rect x="572" y="640" width="22" height="8" fill="#33353B" opacity=".75"/><rect x="574" y="468" width="60" height="8" fill="#33353B" opacity=".75"/><rect x="590" y="486" width="22" height="8" fill="#33353B" opacity=".75"/><rect x="632" y="502" width="56" height="8" fill="#33353B" opacity=".75"/><rect x="650" y="520" width="22" height="8" fill="#33353B" opacity=".75"/><rect x="716" y="426" width="52" height="8" fill="#33353B" opacity=".75"/><rect x="730" y="442" width="22" height="8" fill="#33353B" opacity=".75"/><rect x="790" y="518" width="94" height="8" fill="#33353B" opacity=".75"/><rect x="822" y="536" width="26" height="8" fill="#33353B" opacity=".75"/><rect x="728" y="570" width="76" height="8" fill="#33353B" opacity=".75"/><rect x="754" y="588" width="24" height="8" fill="#33353B" opacity=".75"/><rect x="694" y="614" width="58" height="8" fill="#33353B" opacity=".75"/><rect x="716" y="638" width="18" height="8" fill="#33353B" opacity=".75"/><rect x="992" y="152" width="102" height="8" fill="#33353B" opacity=".75"/><rect x="1030" y="170" width="24" height="8" fill="#33353B" opacity=".75"/><rect x="756" y="204" width="92" height="8" fill="#33353B" opacity=".75"/><rect x="1062" y="204" width="70" height="8" fill="#33353B" opacity=".75"/><rect x="1084" y="222" width="26" height="8" fill="#33353B" opacity=".75"/><rect x="744" y="254" width="72" height="8" fill="#33353B" opacity=".75"/><rect x="770" y="272" width="20" height="8" fill="#33353B" opacity=".75"/><rect x="1090" y="254" width="52" height="8" fill="#33353B" opacity=".75"/><rect x="1104" y="272" width="22" height="8" fill="#33353B" opacity=".75"/><rect x="728" y="296" width="110" height="8" fill="#33353B" opacity=".75"/><rect x="768" y="314" width="24" height="8" fill="#33353B" opacity=".75"/><rect x="1090" y="306" width="52" height="8" fill="#33353B" opacity=".75"/><rect x="1106" y="322" width="18" height="8" fill="#33353B" opacity=".75"/><rect x="770" y="348" width="80" height="8" fill="#33353B" opacity=".75"/><rect x="796" y="366" width="22" height="8" fill="#33353B" opacity=".75"/><rect x="1078" y="348" width="44" height="8" fill="#33353B" opacity=".75"/><rect x="1084" y="366" width="32" height="8" fill="#33353B" opacity=".75"/><rect x="820" y="408" width="70" height="8" fill="#33353B" opacity=".75"/><rect x="846" y="432" width="38" height="8" fill="#33353B" opacity=".75"/><rect x="1034" y="390" width="58" height="8" fill="#33353B" opacity=".75"/><rect x="1052" y="426" width="28" height="8" fill="#33353B" opacity=".75"/><rect x="958" y="424" width="46" height="8" fill="#33353B" opacity=".75"/><rect x="960" y="442" width="42" height="8" fill="#33353B" opacity=".75"/><rect x="858" y="572" width="306" height="96" fill="url(#lg4)"/><rect x="850" y="664" width="322" height="6" fill="#000" opacity=".25"/><rect x="882" y="598" width="22" height="16" fill="#BDBDBD" /><circle cx="1036" cy="608" r="12" fill="#8A4A1E"/><circle cx="892" cy="644" r="12" fill="#E88030"/><rect x="1026" y="632" width="22" height="18" fill="#D22A0A" /><rect x="918" y="604" width="60" height="8" fill="#888" /><rect x="1060" y="604" width="80" height="8" fill="#888" /><rect x="918" y="640" width="78" height="8" fill="#888" /><rect x="1060" y="640" width="46" height="8" fill="#888" /><rect x="986" y="580" width="50" height="6" fill="#888" /><circle cx="88" cy="683" r="19" fill="#F5831F"/><path d="M78 674l20 18M98 674l-20 18M88 666v34" stroke="#FBD9B8" stroke-width="3"/><rect x="120" y="667" width="68" height="11" fill="#8A8A8A" opacity=".7"/><rect x="120" y="686" width="68" height="4" fill="#BDBDBD" /><rect x="195" y="673" width="395" height="11" fill="#9A9A9A" opacity=".75"/><rect x="1195" y="686" width="15" height="6" fill="#999" /></g></svg>
<svg class="b" style="left:30.0px;top:566.0px;" width="150.0" height="90.0" viewBox="0 0 1280 768"><defs><filter id="bl" x="-5%" y="-5%" width="110%" height="110%"><feGaussianBlur stdDeviation="2.2"/></filter><filter id="bl2" x="-5%" y="-5%" width="110%" height="110%"><feGaussianBlur stdDeviation="1.2"/></filter><linearGradient id="og" x1="0" y1="0" x2="0" y2="1"><stop offset="0" stop-color="#EE8D1C"/><stop offset="1" stop-color="#DC680F"/></linearGradient><linearGradient id="lg5" x1="0" y1="0" x2="0" y2="1"><stop offset="0" stop-color="#F6F6F6"/><stop offset="1" stop-color="#DADBDD"/></linearGradient></defs><rect x="47" y="55" width="1178" height="665" fill="#F8F8F8" stroke="#BEBEBE" stroke-width="5"/><rect x="53" y="62" width="282" height="52" fill="#000" opacity=".18" filter="url(#bl2)"/><rect x="50" y="58" width="282" height="52" fill="url(#og)"/><rect x="70" y="64" width="225" height="24" rx="4" fill="#fff" opacity=".78" filter="url(#bl2)"/><g filter="url(#bl2)"><rect x="350" y="86" width="150" height="18" fill="#7A7C86" opacity=".6"/><rect x="505" y="86" width="705" height="18" fill="#2B2D33" opacity=".62"/><rect x="197" y="155" width="271" height="32" fill="#A6A6A6" rx="12"/><rect x="230" y="168" width="206" height="8" fill="#E4E4E4" /><rect x="872" y="147" width="270" height="48" fill="#A6A6A6" rx="12"/><rect x="904" y="154" width="202" height="8" fill="#E4E4E4" /><rect x="890" y="178" width="222" height="8" fill="#E4E4E4" /><rect x="150" y="233" width="340" height="4" fill="#C6C6C6" /><rect x="815" y="233" width="368" height="4" fill="#C6C6C6" /><rect x="150" y="309" width="340" height="4" fill="#C6C6C6" /><rect x="815" y="309" width="368" height="4" fill="#C6C6C6" /><path d="M145 380H470" stroke="#9A9A9A" stroke-width="4" stroke-dasharray="26 16"/><path d="M812 380H1160" stroke="#9A9A9A" stroke-width="4" stroke-dasharray="26 16"/><path d="M145 448H470" stroke="#9A9A9A" stroke-width="4" stroke-dasharray="26 16"/><path d="M812 448H1160" stroke="#9A9A9A" stroke-width="4" stroke-dasharray="26 16"/><rect x="104" y="231" width="30" height="8" fill="#222" /><rect x="762" y="231" width="40" height="8" fill="#222" /><rect x="104" y="307" width="30" height="8" fill="#222" /><rect x="762" y="307" width="40" height="8" fill="#222" /><rect x="104" y="384" width="30" height="8" fill="#222" /><rect x="762" y="384" width="40" height="8" fill="#222" /><rect x="104" y="451" width="30" height="8" fill="#222" /><rect x="762" y="451" width="40" height="8" fill="#222" /><rect x="104" y="529" width="30" height="8" fill="#222" /><rect x="762" y="529" width="40" height="8" fill="#222" /><rect x="180" y="256" width="112" height="276" fill="#FFAC00" /><rect x="342" y="349" width="113" height="183" fill="#FFD42A" /><rect x="214" y="244" width="42" height="8" fill="#555" /><rect x="376" y="338" width="42" height="8" fill="#555" /><rect x="146" y="526" width="346" height="14" fill="#1A1C24" /><rect x="855" y="256" width="111" height="276" fill="#72A545" /><rect x="966" y="258" width="212" height="50" fill="#72A545" /><rect x="1022" y="478" width="115" height="54" fill="#A6D27A" /><rect x="880" y="240" width="56" height="7" fill="#999" /><rect x="1060" y="468" width="40" height="6" fill="#999" /><rect x="815" y="526" width="368" height="14" fill="#1A1C24" /><rect x="162" y="554" width="134" height="10" fill="#222" /><rect x="318" y="554" width="152" height="10" fill="#222" /><rect x="836" y="554" width="144" height="10" fill="#222" /><rect x="1004" y="554" width="154" height="10" fill="#222" /><rect x="530" y="206" width="212" height="112" fill="url(#lg5)" /><rect x="520" y="316" width="232" height="6" fill="#000" opacity=".22"/><rect x="530" y="386" width="212" height="110" fill="url(#lg5)" /><rect x="520" y="494" width="232" height="6" fill="#000" opacity=".22"/><rect x="572" y="206" width="134" height="8" fill="#2E3038" opacity=".8"/><rect x="580" y="222" width="116" height="8" fill="#2E3038" opacity=".8"/><rect x="540" y="238" width="194" height="8" fill="#2E3038" opacity=".8"/><rect x="544" y="256" width="184" height="8" fill="#2E3038" opacity=".8"/><rect x="584" y="282" width="106" height="8" fill="#2E3038" opacity=".8"/><rect x="566" y="394" width="142" height="8" fill="#2E3038" opacity=".8"/><rect x="556" y="410" width="160" height="8" fill="#2E3038" opacity=".8"/><rect x="566" y="427" width="140" height="8" fill="#2E3038" opacity=".8"/><rect x="572" y="444" width="134" height="8" fill="#2E3038" opacity=".8"/><rect x="572" y="461" width="134" height="8" fill="#2E3038" opacity=".8"/><rect x="606" y="478" width="62" height="8" fill="#2E3038" opacity=".8"/><rect x="110" y="597" width="1002" height="9" fill="#1E2026" opacity=".85"/><rect x="905" y="590" width="171" height="14" fill="#1A1AE8" /><rect x="110" y="631" width="994" height="9" fill="#1E2026" opacity=".85"/><circle cx="88" cy="683" r="19" fill="#F5831F"/><path d="M78 674l20 18M98 674l-20 18M88 666v34" stroke="#FBD9B8" stroke-width="3"/><rect x="120" y="667" width="68" height="11" fill="#8A8A8A" opacity=".7"/><rect x="120" y="686" width="68" height="4" fill="#BDBDBD" /><rect x="195" y="673" width="395" height="11" fill="#9A9A9A" opacity=".75"/><rect x="1195" y="686" width="15" height="6" fill="#999" /></g></svg>
<div class="c" style="left:30px;top:660px;width:150px;height:46px"><svg class="b" style="left:0.0px;top:0.0px;" width="150.0" height="75.0" viewBox="0 0 1366 683"><defs><filter id="bl" x="-5%" y="-5%" width="110%" height="110%"><feGaussianBlur stdDeviation="2.2"/></filter><filter id="bl2" x="-5%" y="-5%" width="110%" height="110%"><feGaussianBlur stdDeviation="1.2"/></filter><linearGradient id="og" x1="0" y1="0" x2="0" y2="1"><stop offset="0" stop-color="#EE8D1C"/><stop offset="1" stop-color="#DC680F"/></linearGradient></defs><rect x="52" y="102" width="1254" height="400" fill="#F8F8F8" stroke="#BEBEBE" stroke-width="5"/><rect x="58" y="110" width="300" height="54" fill="#000" opacity=".18" filter="url(#bl2)"/><rect x="55" y="106" width="300" height="54" fill="url(#og)"/><rect x="78" y="114" width="234" height="24" rx="4" fill="#fff" opacity=".78" filter="url(#bl2)"/><g filter="url(#bl2)"><rect x="400" y="122" width="875" height="24" fill="#2B2D45" opacity=".6"/><rect x="410" y="170" width="860" height="23" fill="#2B2D45" opacity=".55"/><rect x="515" y="256" width="285" height="7" fill="#333" /><rect x="560" y="272" width="200" height="7" fill="#333" /><rect x="738" y="328" width="82" height="102" fill="#DDA032" /><rect x="857" y="291" width="90" height="139" fill="#DDA032" /><rect x="985" y="383" width="80" height="47" fill="#DDA032" /><rect x="748" y="310" width="62" height="8" fill="#222" /><rect x="868" y="272" width="68" height="8" fill="#222" /><rect x="994" y="364" width="62" height="8" fill="#222" /></g></svg></div>
<!-- s_slide -->
<div class="c" style="left:343px;top:166px;width:879px;height:495px;background:#F8F8F8;border:1px solid #C8C8C8;"><div style="position:absolute;left:0;top:0;width:879px;height:495px">
<div class="b" style="left:0.0px;top:0.0px;width:214.0px;height:40.0px;background:linear-gradient(#EE8D1C,#E77A15 55%,#DC680F);border-bottom-right-radius:6px;box-shadow:2px 3px 6px rgba(0,0,0,.28);"></div>
<span class="t" style="left:16.0px;top:-1.1px;font-size:22.5px;line-height:29px;color:#fff;letter-spacing:0.330px;-webkit-text-stroke:.35px #fff;text-shadow:0 1px 1px rgba(160,70,0,.5);">Gastos Médicos</span>
<span class="t" style="left:259.4px;top:0.9px;font-size:21.5px;line-height:28px;color:#4D545E;font-weight:700;letter-spacing:0.889px;">31,773</span>
<span class="t" style="left:337.4px;top:0.4px;font-size:22.5px;line-height:29px;color:#4D545E;transform:scaleX(0.8677);">casos</span>
<span class="t" style="left:394.7px;top:0.4px;font-size:22.5px;line-height:29px;color:#4D545E;transform:scaleX(0.9271);">asegurados</span>
<span class="t" style="left:509.5px;top:0.4px;font-size:22.5px;line-height:29px;color:#4D545E;transform:scaleX(0.8991);">de</span>
<span class="t" style="left:540.1px;top:0.4px;font-size:22.5px;line-height:29px;color:#4D545E;transform:scaleX(0.9264);">Covid-19,</span>
<span class="t" style="left:636.3px;top:0.4px;font-size:22.5px;line-height:29px;color:#4D545E;transform:scaleX(0.9097);">con</span>
<span class="t" style="left:676.1px;top:0.4px;font-size:22.5px;line-height:29px;color:#4D545E;transform:scaleX(0.8352);">un</span>
<span class="t" style="left:704.6px;top:0.4px;font-size:22.5px;line-height:29px;color:#4D545E;transform:scaleX(0.8963);">costo</span>
<span class="t" style="left:761.4px;top:0.4px;font-size:22.5px;line-height:29px;color:#4D545E;transform:scaleX(0.9819);">promedio</span>
<span class="t" style="left:373.2px;top:28.6px;font-size:22.5px;line-height:29px;color:#4D545E;transform:scaleX(0.9111);">de</span>
<span class="t" style="left:404.1px;top:29.1px;font-size:21.5px;line-height:28px;color:#4D545E;font-weight:700;letter-spacing:0.919px;">$459,914</span>
<span class="t" style="left:508.2px;top:28.6px;font-size:22.5px;line-height:29px;color:#4D545E;transform:scaleX(0.8672);">en</span>
<span class="t" style="left:537.2px;top:28.6px;font-size:22.5px;line-height:29px;color:#4D545E;transform:scaleX(0.9229);">atención</span>
<span class="t" style="left:623.3px;top:28.6px;font-size:22.5px;line-height:29px;color:#4D545E;transform:scaleX(0.9369);">hospitalaria</span>
<span class="t" style="left:37.0px;top:74.7px;font-size:11.3px;line-height:15px;color:#4D545E;transform:scaleX(0.9957);">MONTO ACUMULADO (EN MILLONES DE PESOS)</span>
<span class="t" style="left:104.0px;top:94.1px;font-size:10.3px;line-height:13px;color:#4D545E;transform:scaleX(0.9510);">TENDENCIA</span>
<div class="b" style="left:173.0px;top:99.0px;width:25.0px;height:6.0px;background:#B8601E;"></div>
<div class="b" style="left:16.0px;top:202.0px;width:42.0px;height:186.7px;background:#FFAC00;box-shadow:2.500px 0 2.500px rgba(60,60,70,.42);"></div>
<div class="b" style="left:16.0px;top:202.0px;width:42.0px;height:6.5px;background:linear-gradient(#FFDA2E,#FCD42C 55%,#B89A24);"></div>
<div class="b" style="left:62.0px;top:193.9px;width:42.0px;height:194.8px;background:#FFAC00;box-shadow:2.500px 0 2.500px rgba(60,60,70,.42);"></div>
<div class="b" style="left:62.0px;top:193.9px;width:42.0px;height:7.7px;background:linear-gradient(#FFDA2E,#FCD42C 55%,#B89A24);"></div>
<div class="b" style="left:109.0px;top:189.2px;width:42.2px;height:199.5px;background:#FFAC00;box-shadow:2.500px 0 2.500px rgba(60,60,70,.42);"></div>
<div class="b" style="left:109.0px;top:189.2px;width:42.2px;height:4.4px;background:linear-gradient(#FFDA2E,#FCD42C 55%,#B89A24);"></div>
<div class="b" style="left:155.0px;top:187.7px;width:42.0px;height:201.0px;background:#FFAC00;box-shadow:2.500px 0 2.500px rgba(60,60,70,.42);"></div>
<div class="b" style="left:155.0px;top:187.7px;width:42.0px;height:1.1px;background:linear-gradient(#FFDA2E,#FCD42C 55%,#B89A24);"></div>
<div class="b" style="left:201.0px;top:174.9px;width:42.0px;height:213.8px;background:#FFAC00;box-shadow:2.500px 0 2.500px rgba(60,60,70,.42);"></div>
<div class="b" style="left:201.0px;top:174.9px;width:42.0px;height:12.7px;background:linear-gradient(#FFDA2E,#FCD42C 55%,#B89A24);"></div>
<div class="b" style="left:247.2px;top:171.9px;width:42.8px;height:216.8px;background:#FFAC00;box-shadow:2.500px 0 2.500px rgba(60,60,70,.42);"></div>
<div class="b" style="left:247.2px;top:171.9px;width:42.8px;height:3.0px;background:linear-gradient(#FFDA2E,#FCD42C 55%,#B89A24);"></div>
<div class="b" style="left:294.0px;top:167.8px;width:42.0px;height:220.9px;background:#FFAC00;box-shadow:2.500px 0 2.500px rgba(60,60,70,.42);"></div>
<div class="b" style="left:294.0px;top:167.8px;width:42.0px;height:3.8px;background:linear-gradient(#FFDA2E,#FCD42C 55%,#B89A24);"></div>
<div class="b" style="left:340.2px;top:166.0px;width:42.0px;height:222.7px;background:#FFAC00;box-shadow:2.500px 0 2.500px rgba(60,60,70,.42);"></div>
<div class="b" style="left:340.2px;top:166.0px;width:42.0px;height:1.8px;background:linear-gradient(#FFDA2E,#FCD42C 55%,#B89A24);"></div>
<svg class="b" style="left:0.0px;top:0.0px;" width="879.0" height="495.0" viewBox="0 0 879 495"><path d="M39.7 279.1 L86.5 265.2 L133.4 256.9 L181.0 255.7 L228.9 232.3 L276.0 226.6 L323.4 220.3 L371.7 216.5" fill="none" stroke="#B95D14" stroke-width="6" stroke-linejoin="round"/></svg>
<span class="t" style="left:17.0px;top:177.8px;font-size:12px;line-height:16px;color:#4D545E;transform:scaleX(0.8778);">12,433.4</span>
<span class="t" style="left:67.5px;top:172.7px;font-size:12px;line-height:16px;color:#4D545E;transform:scaleX(0.8774);">12,757</span>
<span class="t" style="left:109.7px;top:160.8px;font-size:12px;line-height:16px;color:#4D545E;transform:scaleX(0.8774);">12,812</span>
<span class="t" style="left:150.2px;top:154.8px;font-size:12px;line-height:16px;color:#4D545E;transform:scaleX(0.8778);">13,672.2</span>
<span class="t" style="left:201.0px;top:151.5px;font-size:12px;line-height:16px;color:#4D545E;transform:scaleX(0.8778);">13,869.3</span>
<span class="t" style="left:253.0px;top:141.7px;font-size:12px;line-height:16px;color:#4D545E;transform:scaleX(0.8801);">14,122</span>
<span class="t" style="left:292.0px;top:135.8px;font-size:12px;line-height:16px;color:#4D545E;transform:scaleX(0.8778);">14,255.5</span>
<span class="t" style="left:338.3px;top:134.7px;font-size:11.2px;line-height:15px;color:#4D545E;font-weight:700;letter-spacing:0.301px;">14,612.8</span>
<span class="t" style="left:21.0px;top:193.0px;font-size:10.8px;line-height:14px;color:#4D545E;font-weight:700;letter-spacing:0.844px;text-shadow:0 1.500px 1.500px rgba(0,0,0,.28);">427.0</span>
<span class="t" style="left:67.5px;top:186.3px;font-size:10.8px;line-height:14px;color:#4D545E;font-weight:700;letter-spacing:0.869px;text-shadow:0 1.500px 1.500px rgba(0,0,0,.28);">526.0</span>
<span class="t" style="left:114.0px;top:177.0px;font-size:10.8px;line-height:14px;color:#4D545E;font-weight:700;letter-spacing:0.844px;text-shadow:0 1.500px 1.500px rgba(0,0,0,.28);">323.6</span>
<span class="t" style="left:163.8px;top:173.3px;font-size:10.8px;line-height:14px;color:#4D545E;font-weight:700;letter-spacing:0.761px;text-shadow:0 1.500px 1.500px rgba(0,0,0,.28);">55.0</span>
<span class="t" style="left:207.0px;top:172.0px;font-size:10.8px;line-height:14px;color:#4D545E;font-weight:700;letter-spacing:0.669px;text-shadow:0 1.500px 1.500px rgba(0,0,0,.28);">860.0</span>
<span class="t" style="left:253.0px;top:159.2px;font-size:10.8px;line-height:14px;color:#4D545E;font-weight:700;letter-spacing:0.594px;text-shadow:0 1.500px 1.500px rgba(0,0,0,.28);">197.1</span>
<span class="t" style="left:299.0px;top:155.8px;font-size:10.8px;line-height:14px;color:#4D545E;font-weight:700;letter-spacing:0.869px;text-shadow:0 1.500px 1.500px rgba(0,0,0,.28);">252.7</span>
<span class="t" style="left:346.0px;top:152.5px;font-size:10.8px;line-height:14px;color:#4D545E;font-weight:700;letter-spacing:0.694px;text-shadow:0 1.500px 1.500px rgba(0,0,0,.28);">133.5</span>
<span class="t" style="left:15.5px;top:289.8px;font-size:10.2px;line-height:13px;color:#fff;font-weight:700;letter-spacing:0.480px;text-shadow:0 1.500px 0 #4A3400,0.500px 2.500px 1.200px #4A3400;">11,480.4</span>
<span class="t" style="left:61.0px;top:287.7px;font-size:10.2px;line-height:13px;color:#fff;font-weight:700;letter-spacing:0.466px;text-shadow:0 1.500px 0 #4A3400,0.500px 2.500px 1.200px #4A3400;">11,907.4</span>
<span class="t" style="left:106.3px;top:283.9px;font-size:10.2px;line-height:13px;color:#fff;font-weight:700;letter-spacing:0.600px;text-shadow:0 1.500px 0 #4A3400,0.500px 2.500px 1.200px #4A3400;">12,433.4</span>
<span class="t" style="left:152.4px;top:282.3px;font-size:10.2px;line-height:13px;color:#fff;font-weight:700;letter-spacing:0.600px;text-shadow:0 1.500px 0 #4A3400,0.500px 2.500px 1.200px #4A3400;">12,757.0</span>
<span class="t" style="left:199.0px;top:282.3px;font-size:10.2px;line-height:13px;color:#fff;font-weight:700;letter-spacing:0.600px;text-shadow:0 1.500px 0 #4A3400,0.500px 2.500px 1.200px #4A3400;">12,812.0</span>
<span class="t" style="left:246.5px;top:273.7px;font-size:10.2px;line-height:13px;color:#fff;font-weight:700;letter-spacing:0.600px;text-shadow:0 1.500px 0 #4A3400,0.500px 2.500px 1.200px #4A3400;">13,672.2</span>
<span class="t" style="left:292.6px;top:272.9px;font-size:10.2px;line-height:13px;color:#fff;font-weight:700;letter-spacing:0.500px;text-shadow:0 1.500px 0 #4A3400,0.500px 2.500px 1.200px #4A3400;">13,869.3</span>
<span class="t" style="left:340.2px;top:271.4px;font-size:10.2px;line-height:13px;color:#fff;font-weight:700;letter-spacing:0.400px;text-shadow:0 1.500px 0 #4A3400,0.500px 2.500px 1.200px #4A3400;">14,122.0</span>
<span class="t" style="left:29.5px;top:398.5px;font-size:11.2px;line-height:15px;color:#4D545E;font-weight:700;letter-spacing:1.044px;">01</span>
<span class="t" style="left:76.0px;top:398.5px;font-size:11.2px;line-height:15px;color:#4D545E;font-weight:700;letter-spacing:0.943px;">08</span>
<span class="t" style="left:123.3px;top:398.5px;font-size:11.2px;line-height:15px;color:#4D545E;font-weight:700;letter-spacing:0.743px;">15</span>
<span class="t" style="left:170.0px;top:398.5px;font-size:11.2px;line-height:15px;color:#4D545E;font-weight:700;letter-spacing:0.843px;">22</span>
<span class="t" style="left:214.6px;top:396.8px;font-size:11.2px;line-height:15px;color:#4D545E;font-weight:700;letter-spacing:1.144px;">28</span>
<span class="t" style="left:263.4px;top:398.5px;font-size:11.2px;line-height:15px;color:#C2611C;font-weight:700;letter-spacing:1.344px;">05</span>
<span class="t" style="left:311.6px;top:398.5px;font-size:11.2px;line-height:15px;color:#C2611C;font-weight:700;letter-spacing:0.943px;">12</span>
<span class="t" style="left:354.2px;top:398.5px;font-size:11.2px;line-height:15px;color:#C2611C;font-weight:700;letter-spacing:0.743px;">19</span>
<div class="b" style="left:15.5px;top:420.8px;width:222.0px;height:1.2px;background:#111;"></div>
<div class="b" style="left:250.5px;top:420.8px;width:137.1px;height:1.2px;background:#C2611C;"></div>
<span class="t" style="left:110.2px;top:422.6px;font-size:12.3px;line-height:16px;color:#4D545E;transform:scaleX(0.9029);">MARZO</span>
<span class="t" style="left:303.0px;top:422.7px;font-size:11.5px;line-height:15px;color:#C2611C;transform:scaleX(0.9327);-webkit-text-stroke:.3px #C2611C;">ABRIL</span>
<span class="t" style="left:149.7px;top:442.3px;font-size:10.3px;line-height:13px;color:#3F4650;transform:scaleX(0.9508);-webkit-text-stroke:.25px #3F4650;">ÚLTIMAS 8 SEMANAS</span>
<svg class="b" style="left:7.0px;top:453.0px;" width="33.0" height="31.0" viewBox="0 0 33 31"><path d="M0.860 15.400L8.540 1.900H24.650L31.970 15.400L24.650 29H8.540z" fill="#F5831F"/>
    <g fill="none" stroke="#F8F8F8" stroke-width="1.100" stroke-linejoin="miter">
      <path d="M16.230 1.900L12.570 8.300L16.600 15.500L20.620 22.550L16.960 29"/>
      <path d="M4.520 9.200L8.180 15.500H24.280L27.940 22.100"/>
      <path d="M27.500 8.640H19.900L16.600 15.500L12.570 21.800H5.250"/>
    </g></svg>
<span class="t" style="left:43.8px;top:448.9px;font-size:21.5px;line-height:28px;color:#6A6A6A;transform:scaleX(0.9969);font-weight:400;-webkit-text-stroke:.45px #F8F8F8;">AMIS</span>
<span class="t" style="left:43.6px;top:473.3px;font-size:3.6px;line-height:5px;color:#9A9A9A;letter-spacing:0.190px;">ASOCIACIÓN MEXICANA DE</span>
<span class="t" style="left:43.6px;top:477.7px;font-size:3.6px;line-height:5px;color:#9A9A9A;transform:scaleX(0.9885);">INSTITUCIONES DE SEGUROS</span>
<span class="t" style="left:103.0px;top:461.1px;font-size:10.3px;line-height:13px;color:#A9A9A9;transform:scaleX(0.9517);">REPORTE DE CASOS COVID 19 EN POBLACIÓN ASEGURADA</span>
<div class="b" style="left:398.0px;top:188.7px;width:147.0px;height:8.0px;background:radial-gradient(ellipse at 50% 45%,rgba(0,0,0,.5) 0,rgba(0,0,0,.26) 40%,rgba(0,0,0,0) 70%);"></div>
<div class="b" style="left:414.8px;top:124.5px;width:113.2px;height:68.7px;background:linear-gradient(#F8F8F8 0,#F1F1F2 25%,#E9E9EB 60%,#E0E1E3 100%);"></div>
<div class="b" style="left:398.0px;top:281.5px;width:147.0px;height:8.0px;background:radial-gradient(ellipse at 50% 45%,rgba(0,0,0,.5) 0,rgba(0,0,0,.26) 40%,rgba(0,0,0,0) 70%);"></div>
<div class="b" style="left:414.8px;top:216.0px;width:113.2px;height:70.0px;background:linear-gradient(#F8F8F8 0,#F1F1F2 25%,#E9E9EB 60%,#E0E1E3 100%);"></div>
<div class="b" style="left:398.0px;top:374.5px;width:147.0px;height:8.0px;background:radial-gradient(ellipse at 50% 45%,rgba(0,0,0,.5) 0,rgba(0,0,0,.26) 40%,rgba(0,0,0,0) 70%);"></div>
<div class="b" style="left:414.8px;top:310.3px;width:113.2px;height:68.7px;background:linear-gradient(#F8F8F8 0,#F1F1F2 25%,#E9E9EB 60%,#E0E1E3 100%);"></div>
<span class="t" style="left:435.2px;top:136.5px;font-size:11.3px;line-height:15px;color:#4D545E;font-weight:700;letter-spacing:0.939px;">$29,041,114</span>
<span class="t" style="left:424.2px;top:148.9px;font-size:11.3px;line-height:15px;color:#4D545E;transform:scaleX(0.9915);">CASO DE MAYOR</span>
<span class="t" style="left:449.3px;top:161.8px;font-size:11.3px;line-height:15px;color:#4D545E;letter-spacing:0.513px;">MONTO</span>
<span class="t" style="left:458.7px;top:229.8px;font-size:11.3px;line-height:15px;color:#4D545E;font-weight:700;letter-spacing:0.392px;">89%</span>
<span class="t" style="left:438.8px;top:242.0px;font-size:11.3px;line-height:15px;color:#4D545E;letter-spacing:0.159px;">AVANCE DE</span>
<span class="t" style="left:418.1px;top:254.4px;font-size:11.3px;line-height:15px;color:#4D545E;letter-spacing:0.052px;">INDEMNIZACIONES</span>
<span class="t" style="left:443.5px;top:316.1px;font-size:11.3px;line-height:15px;color:#4D545E;font-weight:700;letter-spacing:1.053px;">$459,914</span>
<span class="t" style="left:419.4px;top:328.4px;font-size:11.3px;line-height:15px;color:#4D545E;transform:scaleX(0.9929);">COSTO PROMEDIO</span>
<span class="t" style="left:433.0px;top:341.0px;font-size:11.3px;line-height:15px;color:#4D545E;letter-spacing:0.024px;">DE ATENCIÓN</span>
<span class="t" style="left:431.3px;top:353.2px;font-size:11.3px;line-height:15px;color:#4D545E;transform:scaleX(0.9850);">HOSPITALARIA</span>
<span class="t" style="left:632.0px;top:73.7px;font-size:11.3px;line-height:15px;color:#4D545E;letter-spacing:0.022px;">NÚMERO ACUMULADO DE CASOS</span>
<span class="t" style="left:690.0px;top:94.1px;font-size:10.3px;line-height:13px;color:#4D545E;transform:scaleX(0.9527);">TENDENCIA</span>
<div class="b" style="left:759.2px;top:98.5px;width:24.8px;height:6.3px;background:#00470A;"></div>
<div class="b" style="left:558.2px;top:225.9px;width:37.0px;height:157.7px;box-shadow:1px -1px 3px rgba(0,0,0,.45);"></div>
<div class="b" style="left:595.2px;top:209.7px;width:36.8px;height:173.9px;box-shadow:1px -1px 3px rgba(0,0,0,.45);"></div>
<div class="b" style="left:632.0px;top:197.8px;width:37.0px;height:185.8px;box-shadow:1px -1px 3px rgba(0,0,0,.45);"></div>
<div class="b" style="left:669.0px;top:196.2px;width:36.3px;height:187.4px;box-shadow:1px -1px 3px rgba(0,0,0,.45);"></div>
<div class="b" style="left:705.3px;top:167.3px;width:36.7px;height:216.3px;box-shadow:1px -1px 3px rgba(0,0,0,.45);"></div>
<div class="b" style="left:742.0px;top:156.8px;width:37.0px;height:226.8px;box-shadow:1px -1px 3px rgba(0,0,0,.45);"></div>
<div class="b" style="left:779.0px;top:151.7px;width:36.9px;height:231.9px;box-shadow:1px -1px 3px rgba(0,0,0,.45);"></div>
<div class="b" style="left:815.9px;top:135.7px;width:37.0px;height:247.9px;box-shadow:1px -1px 3px rgba(0,0,0,.45);"></div>
<div class="b" style="left:558.2px;top:225.9px;width:37.3px;height:157.7px;background:linear-gradient(90deg,#5E8A2E 0,#7AA542 4px,#7AA542 100%);"></div>
<div class="b" style="left:595.2px;top:209.7px;width:37.1px;height:173.9px;background:linear-gradient(90deg,#5E8A2E 0,#7AA542 4px,#7AA542 100%);"></div>
<div class="b" style="left:632.0px;top:197.8px;width:37.3px;height:185.8px;background:linear-gradient(90deg,#5E8A2E 0,#7AA542 4px,#7AA542 100%);"></div>
<div class="b" style="left:669.0px;top:196.2px;width:36.6px;height:187.4px;background:linear-gradient(90deg,#5E8A2E 0,#7AA542 4px,#7AA542 100%);"></div>
<div class="b" style="left:705.3px;top:167.3px;width:37.0px;height:216.3px;background:linear-gradient(90deg,#5E8A2E 0,#7AA542 4px,#7AA542 100%);"></div>
<div class="b" style="left:742.0px;top:156.8px;width:37.3px;height:226.8px;background:linear-gradient(90deg,#004F12 0,#02691D 4px,#02691D 100%);"></div>
<div class="b" style="left:779.0px;top:151.7px;width:37.2px;height:231.9px;background:linear-gradient(90deg,#004F12 0,#02691D 4px,#02691D 100%);"></div>
<div class="b" style="left:815.9px;top:135.7px;width:37.3px;height:247.9px;background:linear-gradient(90deg,#004F12 0,#02691D 4px,#02691D 100%);"></div>
<svg class="b" style="left:0.0px;top:0.0px;" width="879.0" height="495.0" viewBox="0 0 879 495"><path d="M567.9 279.8 L607.6 275.0 L645.8 273.5 L685.9 261.3 L722.0 257.5 L760.9 255.0 L799.9 252.0 L844.4 248.3" fill="none" stroke="#063D08" stroke-width="7" stroke-linejoin="round"/></svg>
<span class="t" style="left:560.0px;top:209.4px;font-size:11.8px;line-height:15px;color:#4D545E;transform:scaleX(0.9089);text-shadow:0 1px 1.500px rgba(0,0,0,.35);">27,487</span>
<span class="t" style="left:597.0px;top:193.7px;font-size:11.8px;line-height:15px;color:#4D545E;transform:scaleX(0.9117);text-shadow:0 1px 1.500px rgba(0,0,0,.35);">28,233</span>
<span class="t" style="left:633.8px;top:180.8px;font-size:11.8px;line-height:15px;color:#4D545E;transform:scaleX(0.9089);text-shadow:0 1px 1.500px rgba(0,0,0,.35);">28,813</span>
<span class="t" style="left:670.2px;top:179.6px;font-size:11.8px;line-height:15px;color:#4D545E;transform:scaleX(0.9200);text-shadow:0 1px 1.500px rgba(0,0,0,.35);">28,916</span>
<span class="t" style="left:707.6px;top:151.2px;font-size:11.8px;line-height:15px;color:#4D545E;transform:scaleX(0.9089);text-shadow:0 1px 1.500px rgba(0,0,0,.35);">30,303</span>
<span class="t" style="left:743.9px;top:137.9px;font-size:11.8px;line-height:15px;color:#4D545E;transform:scaleX(0.9283);text-shadow:0 1px 1.500px rgba(0,0,0,.35);">30,768</span>
<span class="t" style="left:780.2px;top:135.1px;font-size:11.8px;line-height:15px;color:#4D545E;transform:scaleX(0.9283);text-shadow:0 1px 1.500px rgba(0,0,0,.35);">31,021</span>
<span class="t" style="left:815.9px;top:118.5px;font-size:11.2px;line-height:15px;color:#4D545E;font-weight:700;letter-spacing:0.449px;text-shadow:0 1px 1.500px rgba(0,0,0,.3);">31,773</span>
<span class="t" style="left:572.9px;top:391.2px;font-size:10.8px;line-height:14px;color:#4D545E;font-weight:700;letter-spacing:0.888px;">01</span>
<span class="t" style="left:608.2px;top:391.2px;font-size:10.8px;line-height:14px;color:#4D545E;font-weight:700;letter-spacing:1.188px;">08</span>
<span class="t" style="left:643.6px;top:391.2px;font-size:10.8px;line-height:14px;color:#4D545E;font-weight:700;letter-spacing:1.188px;">15</span>
<span class="t" style="left:678.7px;top:391.2px;font-size:10.8px;line-height:14px;color:#4D545E;font-weight:700;letter-spacing:1.388px;">22</span>
<span class="t" style="left:716.0px;top:391.2px;font-size:10.8px;line-height:14px;color:#4D545E;font-weight:700;letter-spacing:1.388px;">28</span>
<span class="t" style="left:758.8px;top:389.9px;font-size:10.8px;line-height:14px;color:#C2611C;font-weight:700;letter-spacing:1.188px;">05</span>
<span class="t" style="left:792.4px;top:391.2px;font-size:10.8px;line-height:14px;color:#C2611C;font-weight:700;letter-spacing:1.588px;">12</span>
<span class="t" style="left:829.7px;top:391.2px;font-size:10.8px;line-height:14px;color:#C2611C;font-weight:700;letter-spacing:1.188px;">19</span>
<span class="t" style="left:630.6px;top:406.7px;font-size:11.3px;line-height:15px;color:#4D545E;transform:scaleX(0.9754);">MARZO</span>
<span class="t" style="left:784.4px;top:406.7px;font-size:11.3px;line-height:15px;color:#C2611C;transform:scaleX(0.9461);-webkit-text-stroke:.3px #C2611C;">ABRIL</span>
<span class="t" style="left:683.4px;top:435.5px;font-size:10.3px;line-height:13px;color:#3F4650;transform:scaleX(0.9490);-webkit-text-stroke:.2px #3F4650;">ÚLTIMAS 8 SEMANAS</span>
<span class="t" style="left:472.1px;top:455.9px;font-size:9.8px;line-height:13px;color:#E2690E;font-weight:700;letter-spacing:0.217px;">DEFUNCIONES</span>
<span class="t" style="left:471.4px;top:467.1px;font-size:9.8px;line-height:13px;color:#E2690E;font-weight:700;letter-spacing:0.424px;">(ACUMULADO)</span>
<div class="b" style="left:559.7px;top:458.0px;width:306.6px;height:19.6px;background:#fff;border-radius:9px;box-shadow:0 1px 2px rgba(0,0,0,.06);"></div>
<span class="t" style="left:570.1px;top:457.7px;font-size:11.5px;line-height:15px;color:#E2690E;transform:scaleX(0.9974);">1,800</span>
<span class="t" style="left:607.7px;top:457.7px;font-size:11.5px;line-height:15px;color:#E2690E;transform:scaleX(0.9870);">1,920</span>
<span class="t" style="left:643.0px;top:457.7px;font-size:11.5px;line-height:15px;color:#E2690E;transform:scaleX(0.9974);">1,928</span>
<span class="t" style="left:677.9px;top:457.7px;font-size:11.5px;line-height:15px;color:#E2690E;transform:scaleX(0.9939);">2,044</span>
<span class="t" style="left:709.0px;top:457.7px;font-size:11.5px;line-height:15px;color:#E2690E;transform:scaleX(0.9765);">2,061</span>
<span class="t" style="left:745.9px;top:457.7px;font-size:11.5px;line-height:15px;color:#E2690E;transform:scaleX(0.9835);">2,086</span>
<span class="t" style="left:785.7px;top:458.8px;font-size:11.5px;line-height:15px;color:#E2690E;letter-spacing:0.081px;">2,088</span>
<span class="t" style="left:821.0px;top:458.8px;font-size:11.5px;line-height:15px;color:#E2690E;font-weight:700;letter-spacing:0.456px;">2,057</span>
<span class="t" style="left:866.6px;top:478.1px;font-size:10px;line-height:13px;color:#8A8A8A;transform:scaleX(0.9711);">3</span>
</div></div>
<!-- s_bottom -->
<div class="b" style="left:1350.4px;top:158.0px;width:14.6px;height:458.0px;background:#DADADA;"></div>
<div class="b" style="left:1350.4px;top:159.0px;width:14.6px;height:14.4px;background:#fff;border:1px solid #ABABAB;"></div>
<svg class="b" style="left:1354.0px;top:163.5px;" width="8.0" height="5.5" viewBox="0 0 8.00 5.50"><path d="M0.500 5h6.600l-3.300-4.200z" fill="#777"/></svg>
<div class="b" style="left:1350.4px;top:213.3px;width:14.6px;height:18.1px;background:#fff;border:1px solid #ABABAB;"></div>
<div class="b" style="left:1350.4px;top:601.6px;width:14.6px;height:14.2px;background:#fff;border:1px solid #ABABAB;"></div>
<svg class="b" style="left:1354.0px;top:606.0px;" width="8.0" height="5.5" viewBox="0 0 8.00 5.50"><path d="M0.500 0.600h6.600l-3.300 4.200z" fill="#777"/></svg>
<svg class="b" style="left:1353.5px;top:620.5px;" width="8.0" height="9.5" viewBox="0 0 8.00 9.50"><path d="M0.600 4.200h6.800l-3.400-4z M0.600 8.800h6.800l-3.400-4z" fill="#777"/></svg>
<svg class="b" style="left:1353.5px;top:638.5px;" width="8.0" height="9.5" viewBox="0 0 8.00 9.50"><path d="M0.600 0.400h6.800l-3.400 4z M0.600 5h6.800l-3.400 4z" fill="#777"/></svg>
<div class="b" style="left:218.0px;top:672.0px;width:1148.0px;height:1.0px;background:#C6C6C6;"></div>
<span class="t" style="left:228.3px;top:679.8px;font-size:14px;line-height:18px;color:#595959;letter-spacing:0.183px;">Haga clic para agregar notas</span>
<div class="b" style="left:0.0px;top:706.0px;width:1366.0px;height:21.7px;background:#F3F3F3;"></div>
<div class="b" style="left:0.0px;top:705.5px;width:1366.0px;height:1.0px;background:#C6C6C6;"></div>
<span class="t" style="left:8.4px;top:710.0px;font-size:11.5px;line-height:15px;color:#3A3A3A;transform:scaleX(0.9815);">Diapositiva 3 de 21</span>
<svg class="b" style="left:123.0px;top:709.0px;" width="17.0" height="16.0" viewBox="0 0 17.00 16.00"><g fill="none" stroke="#666" stroke-width="1"><path d="M1.500 2.500h5.500v10.500h-5.500zM7 2.500h3.500M12.500 8.500v4.500h-5.500"/><path d="M7 13l0 2"/><path d="M9.500 9.500l0.600-2.400l4.400-4.600l1.800 1.800l-4.400 4.600z"/></g></svg>
<span class="t" style="left:156.6px;top:710.0px;font-size:11.5px;line-height:15px;color:#3A3A3A;transform:scaleX(0.9546);">Español (México)</span>
<svg class="b" style="left:840.0px;top:710.0px;" width="14.0" height="15.0" viewBox="0 0 14.00 15.00"><g stroke="#555" stroke-width="1.100" fill="none"><path d="M1 7.500h11.500M1 10h11.500M1 12.500h8"/><path d="M4.200 5l2.600-2.800l2.600 2.800z" fill="#555" stroke="none"/></g></svg>
<span class="t" style="left:857.0px;top:710.4px;font-size:11.5px;line-height:15px;color:#3A3A3A;transform:scaleX(0.9820);">Notas</span>
<svg class="b" style="left:906.0px;top:710.0px;" width="15.0" height="15.0" viewBox="0 0 15.00 15.00"><path d="M1 1.500h12.500v8.500h-6.500l-3.500 3.400v-3.400h-2.500z" fill="#555"/></svg>
<span class="t" style="left:924.5px;top:710.4px;font-size:11.5px;line-height:15px;color:#3A3A3A;transform:scaleX(0.9818);">Comentarios</span>
<div class="b" style="left:1008.0px;top:706.5px;width:40.0px;height:21.2px;background:#C9C9C9;"></div>
<svg class="b" style="left:1020.0px;top:709.5px;" width="16.0" height="15.5" viewBox="0 0 16.00 15.50"><g fill="none" stroke="#5A5A5A" stroke-width="1"><rect x="1.500" y="1.500" width="13.400" height="12"/><rect x="6.500" y="3.500" width="6.400" height="3.400"/><path d="M4.500 1.500v12M4.500 9.900h10.400"/></g></svg>
<svg class="b" style="left:1060.0px;top:709.5px;" width="16.0" height="15.5" viewBox="0 0 16.00 15.50"><g fill="none" stroke="#666" stroke-width="1.100"><rect x="1" y="1.500" width="5.200" height="4.400"/><rect x="9.300" y="1.500" width="5.200" height="4.400"/><rect x="1" y="9" width="5.200" height="4.400"/><rect x="9.300" y="9" width="5.200" height="4.400"/></g></svg>
<svg class="b" style="left:1100.0px;top:709.5px;" width="15.0" height="15.5" viewBox="0 0 15.00 15.50"><g fill="none" stroke="#666" stroke-width="1"><path d="M7 2.500c-2-1.200-4-1.200-6 0v10c2-1.200 4-1.200 6 0c2-1.200 4-1.200 6 0v-10c-2-1.200-4-1.200-6 0zM7 2.500v10"/><path d="M2.500 5h3M2.500 7h3M2.500 9h3M8.500 5h3M8.500 7h3M8.500 9h3" stroke-width=".8"/><path d="M7 12.500v2"/></g></svg>
<svg class="b" style="left:1140.0px;top:709.5px;" width="15.0" height="15.5" viewBox="0 0 15.00 15.50"><g fill="none" stroke="#666" stroke-width="1.100"><path d="M1 2h12.500M2.500 2v6h9.500v-6M7.200 8v4.500M4.500 12.800h5.500"/></g></svg>
<div class="b" style="left:1174.4px;top:716.3px;width:7.0px;height:1.1px;background:#555;"></div>
<div class="b" style="left:1187.0px;top:716.6px;width:100.0px;height:1.0px;background:#ABABAB;"></div>
<div class="b" style="left:1236.8px;top:714.0px;width:1.0px;height:6.0px;background:#ABABAB;"></div>
<div class="b" style="left:1204.2px;top:711.7px;width:4.5px;height:11.3px;background:#666;"></div>
<div class="b" style="left:1291.8px;top:716.3px;width:7.8px;height:1.1px;background:#555;"></div>
<div class="b" style="left:1295.2px;top:712.9px;width:1.1px;height:7.8px;background:#555;"></div>
<span class="t" style="left:1312.9px;top:710.4px;font-size:11.5px;line-height:15px;color:#3A3A3A;transform:scaleX(0.9037);">42%</span>
<svg class="b" style="left:1347.0px;top:710.0px;" width="13.0" height="14.0" viewBox="0 0 13.00 14.00"><g fill="none" stroke="#666" stroke-width="1"><rect x="1" y="1" width="11" height="12"/><path d="M6.500 1v12M1 7h11" stroke-dasharray="2.500 2" /><path d="M6.500 4.500l-1.500-1.500M6.500 4.500l1.500-1.500M6.500 9.500l-1.500 1.500M6.500 9.500l1.500 1.500" stroke-width=".9"/></g></svg>
<div class="b" style="left:0.0px;top:727.7px;width:1366.0px;height:40.3px;background:#DBD6D7;"></div>
<svg class="b" style="left:15.8px;top:739.7px;" width="17.0" height="17.0" viewBox="0 0 17 17.200"><path d="M0 2.400l7-1v6.800h-7zM7.900 1.300l9.100-1.300v8.200h-9.100zM0 9h7v6.800l-7-1zM7.900 9h9.100v8.200l-9.100-1.300z" fill="#111"/></svg>
<div class="b" style="left:49.2px;top:729.0px;width:342.0px;height:37.7px;background:#fff;"></div>
<svg class="b" style="left:59.0px;top:739.0px;" width="19.0" height="19.0" viewBox="0 0 19.00 19.00"><circle cx="11.500" cy="7.200" r="5.200" fill="none" stroke="#222" stroke-width="1.300"/><path d="M7.800 11l-6 6" stroke="#222" stroke-width="1.400"/></svg>
<span class="t" style="left:88.6px;top:738.6px;font-size:15.5px;line-height:20px;color:#444;transform:scaleX(0.9321);">Escribe aquí para buscar</span>
<svg class="b" style="left:406.0px;top:738.0px;" width="20.0" height="20.0" viewBox="0 0 20.00 20.00"><circle cx="9.700" cy="9.900" r="6.700" fill="none" stroke="#111" stroke-width="2.100"/></svg>
<svg class="b" style="left:454.0px;top:738.0px;" width="20.0" height="20.0" viewBox="0 0 20.00 20.00"><g fill="none" stroke="#111" stroke-width="1.300"><rect x="3.200" y="5.300" width="9.500" height="8.500"/><path d="M1.800 2.600h12.400M1.800 16.500h12.400M1.800 2v2M14 2v2M1.800 15.400v2M14 15.400v2"/><path d="M16.600 2v6M16.600 11v6.600"/><rect x="15.400" y="7.600" width="2.500" height="2.600" fill="#111" stroke="none"/></g></svg>
<div class="b" style="left:491.0px;top:727.7px;width:47.8px;height:38.3px;background:#EEEAEB;"></div>
<div class="b" style="left:491.0px;top:766.0px;width:47.8px;height:2.0px;background:#C4532D;"></div>
<div class="b" style="left:544.0px;top:766.0px;width:39.7px;height:2.0px;background:#C4532D;"></div>
<div class="b" style="left:789.3px;top:766.0px;width:39.5px;height:2.0px;background:#C4532D;"></div>
<svg class="b" style="left:502.0px;top:736.0px;" width="27.0" height="24.0" viewBox="0 0 27.00 24.00"><circle cx="15" cy="11.800" r="10" fill="#ED6C47"/><path d="M15 1.800a10 10 0 0 1 10 10h-10z" fill="#FF8F6B"/><path d="M25 11.800a10 10 0 0 1-3 7.100l-7-7.100z" fill="#D35230"/>
      <path d="M15 11.800l7 7.100a10 10 0 0 1-14 0z" fill="#ED6C47"/><rect x="1.100" y="5.800" width="12" height="12" rx="1" fill="#C43E1C"/>
      <path d="M5 8.600h3.200c1.700 0 2.600.9 2.600 2.200c0 1.400-1 2.300-2.700 2.300h-1.400v2.200h-1.700zM6.700 10v1.800h1.200c.7 0 1.100-.3 1.100-.9c0-.6-.4-.9-1.100-.9z" fill="#fff"/></svg>
<svg class="b" style="left:552.0px;top:736.0px;" width="25.0" height="24.0" viewBox="0 0 25.00 24.00"><path d="M12.100 1.600a9.900 9.900 0 0 0-8.500 15l-1.700 5.500l5.700-1.600a9.900 9.900 0 1 0 4.500-18.900z" fill="#fff"/><path d="M12.100 3a8.500 8.500 0 0 0-7.100 13.200l-1 3.400l3.500-1a8.500 8.500 0 1 0 4.600-15.600z" fill="#2DB742"/>
      <path d="M8.800 6.800c.4-.4 1-.3 1.200.2l.8 1.800c.1.300 0 .6-.2.800l-.6.700c.6 1.300 1.700 2.400 3.100 3l.8-.8c.2-.2.500-.3.800-.2l1.700.8c.5.200.6.800.3 1.200c-.7 1-1.800 1.400-3 1c-3-.9-5.300-3.300-6-6.200c-.2-.9.300-1.700 1.100-2.300z" fill="#fff"/></svg>
<svg class="b" style="left:600.0px;top:736.0px;" width="26.0" height="24.0" viewBox="0 0 26.00 24.00"><rect x="7" y="1.300" width="17.800" height="21" rx="1.200" fill="#41A5EE"/><rect x="7" y="6.600" width="17.800" height="5.300" fill="#2B7CD3"/><rect x="7" y="11.800" width="17.800" height="5.300" fill="#185ABD"/><path d="M7 17h17.800v4.100a1.200 1.200 0 0 1-1.200 1.200h-16.600z" fill="#103F91"/>
      <rect x="1" y="5.700" width="12" height="12" rx="1" fill="#185ABD"/><path d="M3.200 8.300h1.500l1 4.600l1.100-4.600h1.400l1.100 4.600l1-4.600h1.500l-1.700 6.800h-1.500l-1.100-4.500l-1.100 4.500h-1.500z" fill="#fff"/></svg>
<svg class="b" style="left:649.0px;top:736.0px;" width="26.0" height="24.0" viewBox="0 0 26.00 24.00"><rect x="7" y="1.300" width="17.800" height="21" rx="1.200" fill="#21A366"/><path d="M15.900 1.300h7.700a1.200 1.200 0 0 1 1.200 1.200v4.100h-8.900z" fill="#33C481"/><rect x="7" y="6.600" width="8.900" height="5.300" fill="#107C41"/><rect x="15.900" y="6.600" width="8.900" height="5.300" fill="#21A366"/><rect x="7" y="11.800" width="17.800" height="5.300" fill="#107C41"/><rect x="7" y="11.800" width="8.900" height="5.300" fill="#185C37"/><path d="M7 17h17.800v4.100a1.200 1.200 0 0 1-1.200 1.200h-16.600z" fill="#185C37"/>
      <rect x="1" y="5.700" width="12" height="12" rx="1" fill="#107C41"/><path d="M4.200 8.300h1.800l1.100 2.200l1.200-2.200h1.700l-2 3.400l2.100 3.400h-1.800l-1.300-2.300l-1.300 2.300h-1.700l2.100-3.400z" fill="#fff"/></svg>
<svg class="b" style="left:698.0px;top:735.0px;" width="26.0" height="25.0" viewBox="0 0 26.00 25.00"><path d="M1 8.200l12-7.200l12.100 7.200z" fill="#0A5FB4"/><path d="M3.600 8h19v9h-19z" fill="#fff"/><path d="M3.600 8h19l-9.500 6.200z" fill="#E8E8E8"/>
      <path d="M1 8.200l12.100 9l12-9v14.200a1.500 1.500 0 0 1-1.500 1.500h-21.100a1.500 1.500 0 0 1-1.500-1.500z" fill="#28A8EA"/><path d="M1.600 23.400l11.500-8.600l11.600 8.700a1.500 1.500 0 0 1-1.100.4h-21.100a1.500 1.500 0 0 1-.9-.5z" fill="#0F78D4" opacity=".75"/></svg>
<svg class="b" style="left:748.0px;top:738.0px;" width="24.0" height="20.0" viewBox="0 0 24.00 20.00"><path d="M1.200 1.600a.8.800 0 0 1 .8-.8h6.300l1.800 2h-8.900z" fill="#E3A213"/><rect x="1.200" y="2.600" width="21.500" height="15.600" rx=".8" fill="#FFD257"/><rect x="1.200" y="14.600" width="21.500" height="3.600" fill="#F6C033"/>
      <path d="M5.400 10.600h12.800v7.600h-12.800z" fill="#3A96DD"/><path d="M8.600 13.800h6.400v4.400h-6.400z" fill="#FFD257"/><path d="M5.400 10.600h12.800v1.800h-12.800z" fill="#2C7FC9"/></svg>
<svg class="b" style="left:797.0px;top:736.0px;" width="24.0" height="24.0" viewBox="0 0 24.00 24.00"><circle cx="12" cy="11.800" r="11" fill="#fff"/><path d="M12 .8a11 11 0 0 1 9.530 5.500h-9.530a5.500 5.500 0 0 0-4.760 2.750l-4.770-2.750a11 11 0 0 1 9.530-5.500z" fill="#DB4437"/>
      <path d="M21.530 6.300a11 11 0 0 1-9.530 16.500l4.760-8.250a5.500 5.500 0 0 0 0-5.500z" fill="#FFCD40"/><path d="M12 22.800a11 11 0 0 1-9.530-16.500l4.770 8.250a5.500 5.500 0 0 0 4.760 2.750z" fill="#0F9D58"/>
      <path d="M2.470 6.300l4.770 2.750a5.500 5.500 0 0 0 0 5.500z" fill="#0F9D58"/><path d="M12 17.300l4.760-2.750l-4.760 8.250z" fill="#FFCD40"/>
      <circle cx="12" cy="11.800" r="5" fill="#fff"/><circle cx="12" cy="11.800" r="4" fill="#4285F4"/></svg>
<svg class="b" style="left:848.0px;top:735.0px;" width="20.0" height="26.0" viewBox="0 0 20.00 26.00"><rect x="1" y="1.200" width="17.700" height="23.300" rx="1.600" fill="#6F7E8C"/><rect x="3.400" y="3.600" width="13" height="4.200" fill="#3CC8F4"/>
      <g fill="#E6E9EC"><rect x="3.400" y="10" width="3.400" height="3.400"/><rect x="8.200" y="10" width="3.400" height="3.400"/><rect x="13" y="10" width="3.400" height="3.400"/><rect x="3.400" y="14.800" width="3.400" height="3.400"/><rect x="8.200" y="14.800" width="3.400" height="3.400"/><rect x="3.400" y="19.600" width="3.400" height="3.400"/><rect x="8.200" y="19.600" width="3.400" height="3.400"/></g><rect x="13" y="14.800" width="3.400" height="8.200" fill="#0D3F8F"/></svg>
<svg class="b" style="left:1116.0px;top:743.0px;" width="15.0" height="10.0" viewBox="0 0 15.00 10.00"><path d="M1.300 8l5.900-5.900l5.900 5.900" fill="none" stroke="#111" stroke-width="1.300"/></svg>
<svg class="b" style="left:1138.0px;top:740.0px;" width="19.0" height="14.0" viewBox="0 0 19.00 14.00"><path d="M5 12.400a3.600 3.600 0 0 1-.4-7.200a5 5 0 0 1 9-1.200a3.800 3.800 0 0 1 .8 8.400z" fill="#E1DDDE" stroke="#222" stroke-width="1.200"/><path d="M2.600 10.600c2-2.600 6-4 12-3.200" fill="none" stroke="#555" stroke-width="2.200" opacity=".55"/></svg>
<svg class="b" style="left:1162.0px;top:740.0px;" width="19.0" height="15.0" viewBox="0 0 19.00 15.00"><g fill="none" stroke="#111" stroke-width="1.200"><rect x="5.200" y="4.600" width="10.600" height="7"/><path d="M16 6.600h1.400v3h-1.400"/><path d="M2.200 1.600v2.200M4.600 1.600v2.200M1.200 3.800h4.400v2.400a2.200 2.200 0 0 1-4.400 0zM3.400 8.400v3.400h1.800"/></g></svg>
<svg class="b" style="left:1186.0px;top:739.0px;" width="19.0" height="17.0" viewBox="0 0 19.00 17.00"><g fill="none" stroke="#111" stroke-width="1.200"><path d="M1.200 6h2.600l3.600-3.600v11.600l-3.600-3.600h-2.600z"/><path d="M9.600 6.200a3 3 0 0 1 0 4M11.600 4.400a5.600 5.600 0 0 1 0 7.600M13.600 2.600a8.400 8.400 0 0 1 0 11.200"/></g></svg>
<span class="t" style="left:1215.5px;top:740.3px;font-size:11.5px;line-height:15px;color:#111;transform:scaleX(0.7778);">ESP</span>
<span class="t" style="left:1250.9px;top:731.2px;font-size:12px;line-height:16px;color:#111;transform:scaleX(0.9232);">11:05 a. m.</span>
<span class="t" style="left:1249.6px;top:749.0px;font-size:12px;line-height:16px;color:#111;transform:scaleX(0.9392);">27/04/2021</span>
<svg class="b" style="left:1324.0px;top:739.0px;" width="19.0" height="18.0" viewBox="0 0 19.00 18.00"><path d="M1.600 1.800h15.400v11.200h-5.400l-2.300 2.400l-2.300-2.400h-5.400z" fill="none" stroke="#111" stroke-width="1.300"/></svg>
<div class="b" style="left:1361.0px;top:729.0px;width:1.0px;height:39.0px;background:#9A9697;"></div>
</body></html>
